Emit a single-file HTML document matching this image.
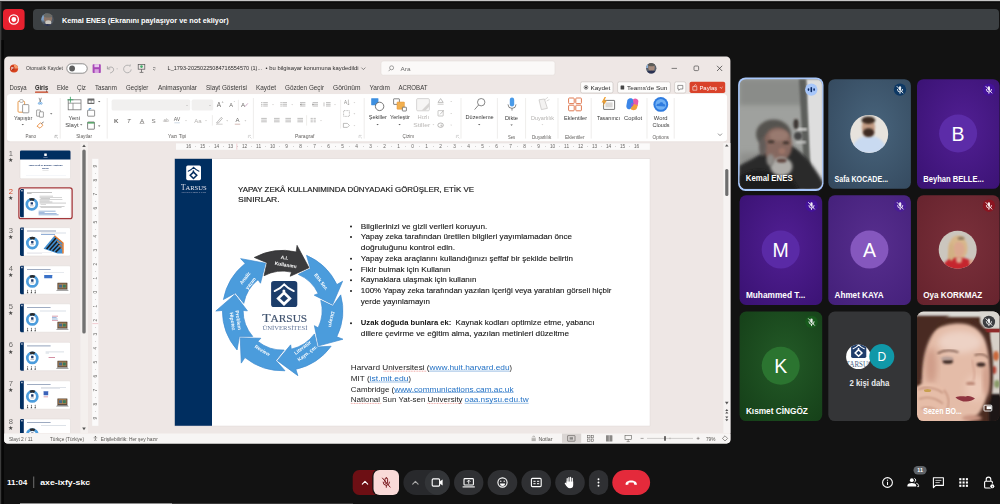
<!DOCTYPE html>
<html lang="tr">
<head>
<meta charset="utf-8">
<title>Meet - axe-ixfy-skc</title>
<style>
*{margin:0;padding:0}
html,body{width:1000px;height:504px;overflow:hidden;background:#121212}
svg{display:block;position:absolute;left:0;top:0}
text{font-family:"Liberation Sans",sans-serif;white-space:pre}
.sf{font-family:"Liberation Serif",serif}
.b{font-weight:bold}
</style>
</head>
<body>
<svg width="1000" height="504" viewBox="0 0 1000 504">
<!-- p_defs -->
<defs>
<filter id="b03" x="-30%" y="-30%" width="160%" height="160%"><feGaussianBlur stdDeviation="0.3"/></filter>
<filter id="b05" x="-30%" y="-30%" width="160%" height="160%"><feGaussianBlur stdDeviation="0.5"/></filter>
<filter id="b08" x="-30%" y="-30%" width="160%" height="160%"><feGaussianBlur stdDeviation="0.8"/></filter>
<filter id="b1" x="-30%" y="-30%" width="160%" height="160%"><feGaussianBlur stdDeviation="1"/></filter>
<filter id="b15" x="-30%" y="-30%" width="160%" height="160%"><feGaussianBlur stdDeviation="1.5"/></filter>
<filter id="b2" x="-30%" y="-30%" width="160%" height="160%"><feGaussianBlur stdDeviation="2"/></filter>
<filter id="b3" x="-30%" y="-30%" width="160%" height="160%"><feGaussianBlur stdDeviation="3"/></filter>
<filter id="b4" x="-30%" y="-30%" width="160%" height="160%"><feGaussianBlur stdDeviation="4"/></filter>
<filter id="b6" x="-30%" y="-30%" width="160%" height="160%"><feGaussianBlur stdDeviation="6"/></filter>
<radialGradient id="gPurple" cx="55%" cy="45%" r="75%"><stop offset="0" stop-color="#511f93"/><stop offset="1" stop-color="#3a1273"/></radialGradient>
<radialGradient id="gPurple2" cx="55%" cy="45%" r="75%"><stop offset="0" stop-color="#572e8e"/><stop offset="1" stop-color="#44207a"/></radialGradient>
<radialGradient id="gBlue" cx="55%" cy="45%" r="75%"><stop offset="0" stop-color="#48647c"/><stop offset="1" stop-color="#34495e"/></radialGradient>
<radialGradient id="gRed" cx="55%" cy="45%" r="75%"><stop offset="0" stop-color="#7a303b"/><stop offset="1" stop-color="#66232d"/></radialGradient>
<radialGradient id="gGreen" cx="55%" cy="45%" r="75%"><stop offset="0" stop-color="#235a27"/><stop offset="1" stop-color="#153f18"/></radialGradient>
</defs>
<!-- p_meet -->
<rect x="0" y="0" width="1000" height="504" fill="#121212"/>
<rect x="0" y="0" width="1000" height="1.4" fill="#c6c6c6"/>
<rect x="0" y="1.4" width="1000" height="1.6" fill="#0b0b0b"/>
<rect x="0" y="1.4" width="1.4" height="503" fill="#3c3c3c"/>
<rect x="1.4" y="40" width="2.6" height="464" fill="#070707"/>
<rect x="3" y="9" width="21.6" height="21" rx="4" fill="#e7212f"/>
<circle cx="13.8" cy="19.5" r="4.6" fill="none" stroke="#fff" stroke-width="1.3"/>
<circle cx="13.8" cy="19.5" r="2.4" fill="#fff"/>
<rect x="33" y="9" width="966" height="21" rx="4" fill="#3c4043"/>
<g>
<clipPath id="cpAv"><circle cx="47.5" cy="19.6" r="6.3"/></clipPath>
<g clip-path="url(#cpAv)">
<rect x="40" y="12" width="16" height="16" fill="#4d5560"/>
<rect x="40" y="12" width="6" height="9" fill="#7fa2c8" filter="url(#b08)"/>
<ellipse cx="48" cy="18.5" rx="4.2" ry="4.6" fill="#8b7468" filter="url(#b05)"/>
<ellipse cx="48" cy="15" rx="4.6" ry="2.6" fill="#6a6a66" filter="url(#b05)"/>
<ellipse cx="48.3" cy="22.5" rx="3" ry="2.2" fill="#c9c6c0" filter="url(#b05)"/>
<ellipse cx="47.5" cy="27" rx="7" ry="3" fill="#2b3350" filter="url(#b05)"/>
</g></g>
<text x="62" y="22.66" font-size="8" fill="#fff" class="b" textLength="166.6" lengthAdjust="spacingAndGlyphs">Kemal ENES (Ekranını paylaşıyor ve not ekliyor)</text>
<rect x="20" y="503" width="152" height="1" fill="#8c8c8c"/><rect x="172" y="503" width="181" height="1" fill="#3a3a3a"/>
<!-- p_tiles -->
<clipPath id="cpT00"><rect x="739.6" y="79.2" width="82.6" height="109.6" rx="6.5"/></clipPath>
<clipPath id="cpT01"><rect x="739.6" y="195.3" width="82.6" height="109.6" rx="6.5"/></clipPath>
<clipPath id="cpT02"><rect x="739.6" y="311.5" width="82.6" height="109.6" rx="6.5"/></clipPath>
<clipPath id="cpT10"><rect x="828.3" y="79.2" width="82.6" height="109.6" rx="6.5"/></clipPath>
<clipPath id="cpT11"><rect x="828.3" y="195.3" width="82.6" height="109.6" rx="6.5"/></clipPath>
<clipPath id="cpT12"><rect x="828.3" y="311.5" width="82.6" height="109.6" rx="6.5"/></clipPath>
<clipPath id="cpT20"><rect x="917" y="79.2" width="82.6" height="109.6" rx="6.5"/></clipPath>
<clipPath id="cpT21"><rect x="917" y="195.3" width="82.6" height="109.6" rx="6.5"/></clipPath>
<clipPath id="cpT22"><rect x="917" y="311.5" width="82.6" height="109.6" rx="6.5"/></clipPath>
<rect x="738.1" y="77.4" width="85.4" height="113.6" rx="7.5" fill="#a8c7fa"/>
<g clip-path="url(#cpT00)">
<rect x="739.6" y="79.2" width="82.6" height="109.6" fill="#9fa19e"/>
<rect x="739.6" y="79.2" width="82.6" height="26" fill="#8a8c89" filter="url(#b2)"/>
<rect x="739.6" y="153.2" width="40" height="40" fill="#8c8d8a" filter="url(#b3)"/>
<path d="M806 79.2 L823 79.2 L823 188.8 L811 188.8 Z" fill="#dedede" filter="url(#b1)"/>
<path d="M799 79.2 L806 79.2 L811 188.8 L805 188.8 Z" fill="#5d5e5c" filter="url(#b1)"/>
<rect x="797" y="128" width="10" height="2.6" fill="#d4d4d2" filter="url(#b08)"/>
<rect x="796" y="141" width="10" height="2.4" fill="#c4c4c2" filter="url(#b08)"/>
<ellipse cx="796" cy="124" rx="2.6" ry="5" fill="#3a3633" filter="url(#b08)"/>
<ellipse cx="798" cy="136" rx="4" ry="4" fill="#444" filter="url(#b08)"/>
<path d="M739 166 C750 160 758 156 764 152 L792 146 C803 152 814 166 823 182 L823 192 L739 192 Z" fill="#2a2a2b" filter="url(#b15)"/>
<path d="M739 176 C752 170 760 168 768 172 L790 176 L800 192 L739 192 Z" fill="#1b1b1c" filter="url(#b15)"/>
<ellipse cx="773.5" cy="134" rx="17.5" ry="14.5" fill="#55534f" filter="url(#b15)"/>
<ellipse cx="777.5" cy="145" rx="14.6" ry="17.4" fill="#86685e" filter="url(#b15)"/>
<ellipse cx="779" cy="135.5" rx="9.5" ry="5.5" fill="#997a6f" filter="url(#b15)"/>
<ellipse cx="762.6" cy="147" rx="3.6" ry="9" fill="#625c58" filter="url(#b15)"/>
<ellipse cx="781.4" cy="166.6" rx="11" ry="9.4" fill="#afada9" filter="url(#b15)"/>
<ellipse cx="770.5" cy="160" rx="4" ry="6" fill="#8f8c88" filter="url(#b15)"/>
<ellipse cx="782" cy="151" rx="3.4" ry="3" fill="#9c7468" filter="url(#b1)"/>
<ellipse cx="781.6" cy="160.6" rx="5" ry="2.2" fill="#5e453e" filter="url(#b08)"/>
<ellipse cx="771" cy="141.8" rx="3.4" ry="1.5" fill="#42342f" filter="url(#b08)"/>
<ellipse cx="786" cy="142.8" rx="3.2" ry="1.5" fill="#42342f" filter="url(#b08)"/>
</g>
<text x="745.8" y="181.24" font-size="8.5" fill="#fff" class="b" textLength="46.8" lengthAdjust="spacingAndGlyphs">Kemal ENES</text>
<circle cx="811.3" cy="89.6" r="6.2" fill="#a8c7fa"/>
<rect x="807.7" y="88.3" width="1.6" height="2.6" rx="0.8" fill="#0b2a66"/>
<rect x="810.5" y="87" width="1.6" height="5.2" rx="0.8" fill="#0b2a66"/>
<rect x="813.3" y="88.3" width="1.6" height="2.6" rx="0.8" fill="#0b2a66"/>
<rect x="828.3" y="79.2" width="82.6" height="109.6" rx="6.5" fill="url(#gBlue)"/>
<clipPath id="cpSafa"><circle cx="869.2" cy="133.9" r="19"/></clipPath>
<g clip-path="url(#cpSafa)">
<rect x="850" y="114" width="40" height="40" fill="#e7e3dd"/>
<path d="M851 153 C853 140 860 136 869 136 C879 136 885 140 887 153 Z" fill="#c9daf1" filter="url(#b08)"/>
<ellipse cx="868.4" cy="127.2" rx="6.6" ry="8.4" fill="#c39c84" filter="url(#b08)"/>
<ellipse cx="868.4" cy="120.2" rx="6.8" ry="3.7" fill="#3b2c23" filter="url(#b08)"/>
<ellipse cx="868.6" cy="132.6" rx="5.7" ry="4.4" fill="#3c2b23" filter="url(#b08)"/>
</g>
<circle cx="900" cy="89.6" r="6.2" fill="#0d3864"/>
<g stroke="#fff" stroke-width="0.9" fill="none" stroke-linecap="round" opacity="0.92">
<rect x="898.9" y="86.2" width="2.2" height="4.4" rx="1.1" fill="#fff" stroke="none"/>
<path d="M897.4 89.4 a2.6 2.6 0 0 0 5.2 0"/>
<path d="M900 92 v1.4"/>
<path d="M897 86.4 L903 93"/>
</g>
<text x="834.6" y="181.64" font-size="8.5" fill="#fff" class="b" textLength="53.5" lengthAdjust="spacingAndGlyphs">Safa KOCADE...</text>
<rect x="917" y="79.2" width="82.6" height="109.6" rx="6.5" fill="url(#gPurple)"/>
<circle cx="958.1" cy="133.5" r="19" fill="#5c2ca8"/><text x="958.1" y="140.68" font-size="19.5" fill="#fff" text-anchor="middle">B</text>
<circle cx="988.9" cy="89.6" r="6.2" fill="#44129a"/>
<g stroke="#fff" stroke-width="0.9" fill="none" stroke-linecap="round" opacity="0.92">
<rect x="987.8" y="86.2" width="2.2" height="4.4" rx="1.1" fill="#fff" stroke="none"/>
<path d="M986.3 89.4 a2.6 2.6 0 0 0 5.2 0"/>
<path d="M988.9 92 v1.4"/>
<path d="M985.9 86.4 L991.9 93"/>
</g>
<text x="923.3" y="181.64" font-size="8.5" fill="#fff" class="b" textLength="60.5" lengthAdjust="spacingAndGlyphs">Beyhan BELLE...</text>
<rect x="739.6" y="195.3" width="82.6" height="109.6" rx="6.5" fill="url(#gPurple)"/>
<circle cx="780.7" cy="249.6" r="19" fill="#5a2aa6"/><text x="780.7" y="256.78" font-size="19.5" fill="#fff" text-anchor="middle">M</text>
<circle cx="811.5" cy="205.7" r="6.2" fill="#44129a"/>
<g stroke="#fff" stroke-width="0.9" fill="none" stroke-linecap="round" opacity="0.92">
<rect x="810.4" y="202.3" width="2.2" height="4.4" rx="1.1" fill="#fff" stroke="none"/>
<path d="M808.9 205.5 a2.6 2.6 0 0 0 5.2 0"/>
<path d="M811.5 208.1 v1.4"/>
<path d="M808.5 202.5 L814.5 209.1"/>
</g>
<text x="745.9" y="297.74" font-size="8.5" fill="#fff" class="b" textLength="59.5" lengthAdjust="spacingAndGlyphs">Muhammed T...</text>
<rect x="828.3" y="195.3" width="82.6" height="109.6" rx="6.5" fill="url(#gPurple2)"/>
<circle cx="869.4" cy="249.6" r="19" fill="#8557be"/><text x="869.4" y="256.78" font-size="19.5" fill="#fff" text-anchor="middle">A</text>
<circle cx="900.2" cy="205.7" r="6.2" fill="#4a1d96"/>
<g stroke="#fff" stroke-width="0.9" fill="none" stroke-linecap="round" opacity="0.92">
<rect x="899.1" y="202.3" width="2.2" height="4.4" rx="1.1" fill="#fff" stroke="none"/>
<path d="M897.6 205.5 a2.6 2.6 0 0 0 5.2 0"/>
<path d="M900.2 208.1 v1.4"/>
<path d="M897.2 202.5 L903.2 209.1"/>
</g>
<text x="834.6" y="297.74" font-size="8.5" fill="#fff" class="b" textLength="49" lengthAdjust="spacingAndGlyphs">Ahmet KAYA</text>
<rect x="917" y="195.3" width="82.6" height="109.6" rx="6.5" fill="url(#gRed)"/>
<clipPath id="cpOya"><circle cx="957.7" cy="249.8" r="19"/></clipPath>
<g clip-path="url(#cpOya)">
<rect x="938" y="230" width="40" height="40" fill="#cbc6be"/>
<ellipse cx="958" cy="248" rx="9.6" ry="12.4" fill="#d8b78b" filter="url(#b08)"/>
<ellipse cx="951.6" cy="258" rx="3.6" ry="8.5" fill="#d2b084" filter="url(#b08)"/>
<path d="M941 272 C943 261 949 257.4 958 257.6 C967 257.2 973.4 260 975 272 Z" fill="#c6262d" filter="url(#b08)"/>
<ellipse cx="971.6" cy="262.6" rx="2.4" ry="3.4" fill="#d9a58c" filter="url(#b08)"/>
<ellipse cx="958.8" cy="249.4" rx="5.8" ry="7.6" fill="#dba88f" filter="url(#b08)"/>
<ellipse cx="959" cy="259.4" rx="3" ry="3.6" fill="#dba88f" filter="url(#b08)"/>
<ellipse cx="961" cy="238.2" rx="3.4" ry="1.5" fill="#8a765e" filter="url(#b08)"/>
<ellipse cx="951.4" cy="252" rx="2.6" ry="9" fill="#d2b084" filter="url(#b08)"/>
</g>
<circle cx="988.9" cy="205.7" r="6.2" fill="#8c1420"/>
<g stroke="#fff" stroke-width="0.9" fill="none" stroke-linecap="round" opacity="0.92">
<rect x="987.8" y="202.3" width="2.2" height="4.4" rx="1.1" fill="#fff" stroke="none"/>
<path d="M986.3 205.5 a2.6 2.6 0 0 0 5.2 0"/>
<path d="M988.9 208.1 v1.4"/>
<path d="M985.9 202.5 L991.9 209.1"/>
</g>
<text x="923.3" y="297.74" font-size="8.5" fill="#fff" class="b" textLength="59" lengthAdjust="spacingAndGlyphs">Oya KORKMAZ</text>
<rect x="739.6" y="311.5" width="82.6" height="109.6" rx="6.5" fill="url(#gGreen)"/>
<circle cx="780.7" cy="365.8" r="19" fill="#2b7430"/><text x="780.7" y="372.98" font-size="19.5" fill="#fff" text-anchor="middle">K</text>
<circle cx="811.5" cy="321.9" r="6.2" fill="#175a1c"/>
<g stroke="#fff" stroke-width="0.9" fill="none" stroke-linecap="round" opacity="0.92">
<rect x="810.4" y="318.5" width="2.2" height="4.4" rx="1.1" fill="#fff" stroke="none"/>
<path d="M808.9 321.7 a2.6 2.6 0 0 0 5.2 0"/>
<path d="M811.5 324.3 v1.4"/>
<path d="M808.5 318.7 L814.5 325.3"/>
</g>
<text x="745.9" y="413.94" font-size="8.5" fill="#fff" class="b" textLength="62" lengthAdjust="spacingAndGlyphs">Kısmet CİNGÖZ</text>
<rect x="828.3" y="311.5" width="82.6" height="109.6" rx="6.5" fill="#343537"/>
<clipPath id="cpTL"><circle cx="858.4" cy="356.8" r="12.3"/></clipPath>
<g clip-path="url(#cpTL)">
<rect x="846" y="344" width="25" height="25" fill="#fff"/>
<rect x="851.1" y="342.8" width="15.2" height="15.2" rx="1.67" fill="#1f3d6b"/><path d="M853.13 348.72 Q856.73 347.15 858.7 344.83 Q860.67 347.15 864.27 348.72" fill="none" stroke="#fff" stroke-width="1.04" stroke-linecap="round"/><path d="M858.58 349.7 L861.95 352.95 L858.58 356.2 L855.22 352.95 Z" fill="none" stroke="#fff" stroke-width="1.57" stroke-linejoin="miter"/><circle cx="858.53" cy="348.72" r="0.87" fill="#fff"/>
<text x="858.8" y="366.98" font-size="7.2" fill="#4a5f85" text-anchor="middle" class="sf" textLength="26" lengthAdjust="spacingAndGlyphs">TARSUS</text>
</g>
<circle cx="881.8" cy="356.5" r="12.5" fill="#1098a8"/>
<text x="881.8" y="361.1" font-size="12" fill="#fff" text-anchor="middle">D</text>
<text x="869.4" y="386.31" font-size="8.4" fill="#e8eaed" text-anchor="middle" class="b" textLength="40" lengthAdjust="spacingAndGlyphs">2 kişi daha</text>
<g clip-path="url(#cpT22)">
<rect x="917" y="311.5" width="82.6" height="109.6" fill="#4a2b20"/>
<rect x="915" y="309.5" width="86.6" height="7.6" fill="#dcdbd6" filter="url(#b08)"/>
<rect x="980" y="309.5" width="22" height="20" fill="#d9d6d0" filter="url(#b08)"/>
<rect x="990" y="330" width="12" height="66" fill="#d6cfc7" filter="url(#b1)"/>
<rect x="978" y="328.8" width="24" height="3.6" fill="#8e2c2a" filter="url(#b05)"/>
<ellipse cx="996" cy="356" rx="3" ry="5" fill="#c9683a" filter="url(#b1)"/>
<ellipse cx="994" cy="370" rx="2.4" ry="4" fill="#b84a3a" filter="url(#b1)"/>
<ellipse cx="997" cy="384" rx="3" ry="4" fill="#8a9a6a" filter="url(#b1)"/>
<rect x="989" y="394" width="14" height="30" fill="#1c1718" filter="url(#b1)"/>
<path d="M972 320 C986 322 994 340 993 372 C993 386 992 396 990 402 L984 400 C987 380 986 350 978 336 Z" fill="#4a2b20" filter="url(#b1)"/>
<path d="M921.5 352 C922 334 938 323.4 960 323.4 C978 323.4 988 338 989 360 C990 382 988 400 980 412 C974 420 966 424 956 424 L930 424 C923 410 920 380 921.5 352 Z" fill="#e4bca8" filter="url(#b15)"/>
<ellipse cx="960" cy="342" rx="22" ry="11" fill="#edd2c5" filter="url(#b3)"/>
<ellipse cx="975" cy="388" rx="10" ry="13" fill="#ecc9b8" filter="url(#b3)"/>
<ellipse cx="931" cy="366" rx="6" ry="18" fill="#cf9c88" filter="url(#b3)"/>
<ellipse cx="986" cy="380" rx="3" ry="16" fill="#cf9c88" filter="url(#b2)"/>
<path d="M915 316 L950 316 C940 322 932 332 927 346 C924 354 922 366 921 380 L915 380 Z" fill="#4a2b20" filter="url(#b15)"/>
<ellipse cx="947.8" cy="361.4" rx="5.2" ry="2.4" fill="#3a2620" filter="url(#b08)"/>
<ellipse cx="981" cy="364.6" rx="4.4" ry="2.2" fill="#3a2620" filter="url(#b08)"/>
<ellipse cx="947" cy="358.4" rx="6.5" ry="1.8" fill="#b7a09a" filter="url(#b08)"/>
<path d="M937.6 353.4 C944 349.6 952 349.8 958.4 352.2" fill="none" stroke="#7a5648" stroke-width="1.7" filter="url(#b08)"/>
<path d="M974.6 355.2 C980 353.4 985.4 354.8 988.6 358" fill="none" stroke="#7a5648" stroke-width="1.6" filter="url(#b08)"/>
<path d="M972 360 C974 370 976 376 973 381" fill="none" stroke="#d2a08e" stroke-width="1.4" filter="url(#b1)"/>
<ellipse cx="970.6" cy="383.4" rx="4.6" ry="1.6" fill="#b98472" filter="url(#b08)"/>
<path d="M955.4 397.4 C960 395.4 964 396.6 966 396.4 C969 395.6 972 396.6 975 398.6 C970 402.8 961 402.6 955.4 397.4 Z" fill="#8f3640" filter="url(#b05)"/>
<ellipse cx="972" cy="418" rx="10" ry="3" fill="#c99482" filter="url(#b15)"/>
<path d="M915 388 C922 381 936 382 944 388 C950 394 950 404 946 412 C943 418 940 422 938 426 L915 426 Z" fill="#e6bda8" filter="url(#b1)"/>
<path d="M918 389.6 C926 386 936 387.6 943 393" fill="none" stroke="#b5806c" stroke-width="1.1" filter="url(#b08)"/>
<path d="M919 399 C927 396 936 398 943 403.6" fill="none" stroke="#b5806c" stroke-width="1.1" filter="url(#b08)"/>
<path d="M921 408.6 C928 406 935 408 940 412.6" fill="none" stroke="#b5806c" stroke-width="1" filter="url(#b08)"/>
<path d="M944 390 C949 396 950 404 946 412" fill="none" stroke="#c08a76" stroke-width="1.2" filter="url(#b1)"/>
<ellipse cx="927.6" cy="390.6" rx="3.6" ry="1.5" fill="#c8a050" filter="url(#b05)"/>
</g>
<circle cx="988.9" cy="321.9" r="6.2" fill="#3c3d40"/>
<g stroke="#fff" stroke-width="0.9" fill="none" stroke-linecap="round" opacity="0.92">
<rect x="987.8" y="318.5" width="2.2" height="4.4" rx="1.1" fill="#fff" stroke="none"/>
<path d="M986.3 321.7 a2.6 2.6 0 0 0 5.2 0"/>
<path d="M988.9 324.3 v1.4"/>
<path d="M985.9 318.7 L991.9 325.3"/>
</g>
<text x="923.3" y="413.54" font-size="8.5" fill="#fff" class="b" textLength="38.5" lengthAdjust="spacingAndGlyphs">Sezen BO...</text>
<rect x="984" y="405.2" width="7.8" height="5.8" rx="0.8" fill="none" stroke="#fff" stroke-width="0.9"/>
<rect x="986.6" y="406.2" width="4.8" height="3" fill="#fff"/>
<!-- p_ppt -->
<g id="ppt" filter="url(#b03)">
<path d="M4.2 440 V60.8 a4.2 4.2 0 0 1 4.2 -4.2 H726.2 a4.2 4.2 0 0 1 4.2 4.2 V439.6 a3.8 3.8 0 0 1 -3.8 3.8 H7.6 a3.4 3.4 0 0 1 -3.4 -3.4 Z" fill="#eee7e5"/>
<circle cx="14" cy="68.5" r="4.1" fill="#d8431f"/>
<path d="M14 64.4 a4.1 4.1 0 0 1 4.1 4.1 H14 Z" fill="#f59a6a"/>
<rect x="10.6" y="66.6" width="3.8" height="4" rx="0.6" fill="#b7321a"/>
<text x="12.5" y="69.82" font-size="3.4" fill="#fff" text-anchor="middle" class="b">P</text>
<text x="26" y="70.4" font-size="5.3" fill="#3a3a3a" textLength="37" lengthAdjust="spacingAndGlyphs">Otomatik Kaydet</text>
<rect x="66.8" y="63.8" width="20.4" height="9.4" rx="4.7" fill="#fff" stroke="#616161" stroke-width="0.7"/>
<circle cx="72.1" cy="68.5" r="2.9" fill="#5f5f5f"/>
<rect x="92.6" y="64.2" width="8.2" height="8.8" rx="0.8" fill="#a848b8"/>
<rect x="94.4" y="64.2" width="4.6" height="3" fill="#e9c8ee"/>
<rect x="94.6" y="69.2" width="4.2" height="3.8" fill="#d9a6e0"/>
<path d="M107.4 66.2 L107.4 69 L110.2 69 M107.6 68.8 C109.4 66.2 113.6 66.6 113.6 69.6 C113.6 71.2 112.4 72.2 110.2 73" fill="none" stroke="#9a9a9a" stroke-width="0.8"/>
<line x1="116.4" y1="68.8" x2="118" y2="68.8" stroke="#aaa" stroke-width="0.5"/>
<path d="M130.2 66.4 L130.2 64.4 M130 66.2 A3.8 3.8 0 1 0 131.2 69.4" fill="none" stroke="#a6a6a6" stroke-width="0.8"/>
<rect x="138.2" y="64.4" width="6.6" height="4.8" fill="none" stroke="#555" stroke-width="0.7"/>
<path d="M141.5 69.2 V72.2 M139.6 72.4 H143.4" fill="none" stroke="#555" stroke-width="0.7"/>
<circle cx="141.5" cy="66.6" r="1.3" fill="#3fae6a"/>
<path d="M153 67.6 H155.4 M153 69 L154.2 70.2 L155.4 69" fill="none" stroke="#555" stroke-width="0.6"/>
<text x="167.6" y="70.47" font-size="5.5" fill="#2b2b2b" textLength="94.4" lengthAdjust="spacingAndGlyphs">L_1793-20250225084716554570 (1)...</text>
<text x="265.6" y="70.47" font-size="5.5" fill="#2b2b2b" textLength="93" lengthAdjust="spacingAndGlyphs">• bu bilgisayar konumuna kaydedildi</text>
<path d="M361.4 67.6 L363.4 69.6 L365.4 67.6" fill="none" stroke="#444" stroke-width="0.6"/>
<rect x="381" y="61" width="174" height="14.2" rx="2.2" fill="#fbf9f8" stroke="#e2dbd8" stroke-width="0.6"/>
<circle cx="391.6" cy="67.8" r="2" fill="none" stroke="#666" stroke-width="0.6"/>
<line x1="390.2" y1="69.4" x2="388.6" y2="71.2" stroke="#666" stroke-width="0.6"/>
<text x="400.5" y="70.5" font-size="5.6" fill="#6a6a6a" textLength="10" lengthAdjust="spacingAndGlyphs">Ara</text>
<clipPath id="cpAcc"><circle cx="651.2" cy="68.2" r="5.2"/></clipPath><g clip-path="url(#cpAcc)">
<rect x="645" y="62" width="13" height="13" fill="#59616d"/>
<ellipse cx="651.5" cy="67.5" rx="3.2" ry="3.8" fill="#a58a7c" filter="url(#b05)"/>
<ellipse cx="651.5" cy="64.2" rx="3.6" ry="2" fill="#5c5b58" filter="url(#b05)"/>
<ellipse cx="651.5" cy="73.5" rx="6" ry="3" fill="#2a3352" filter="url(#b05)"/>
<rect x="645" y="62" width="3" height="6" fill="#8cb0d8" filter="url(#b05)"/>
</g>
<line x1="671.6" y1="68.4" x2="677" y2="68.4" stroke="#333" stroke-width="0.6"/>
<rect x="694" y="66" width="4.6" height="4.6" rx="1" fill="none" stroke="#333" stroke-width="0.6"/>
<path d="M717 65.8 L722.2 71 M722.2 65.8 L717 71" fill="none" stroke="#333" stroke-width="0.7"/>
<text x="9.5" y="90.06" font-size="6.3" fill="#3b3a39" textLength="17" lengthAdjust="spacingAndGlyphs">Dosya</text>
<text x="57" y="90.06" font-size="6.3" fill="#3b3a39" textLength="11.6" lengthAdjust="spacingAndGlyphs">Ekle</text>
<text x="77" y="90.06" font-size="6.3" fill="#3b3a39" textLength="9" lengthAdjust="spacingAndGlyphs">Çiz</text>
<text x="95" y="90.06" font-size="6.3" fill="#3b3a39" textLength="22" lengthAdjust="spacingAndGlyphs">Tasarım</text>
<text x="126" y="90.06" font-size="6.3" fill="#3b3a39" textLength="22.4" lengthAdjust="spacingAndGlyphs">Geçişler</text>
<text x="158" y="90.06" font-size="6.3" fill="#3b3a39" textLength="39" lengthAdjust="spacingAndGlyphs">Animasyonlar</text>
<text x="206" y="90.06" font-size="6.3" fill="#3b3a39" textLength="41" lengthAdjust="spacingAndGlyphs">Slayt Gösterisi</text>
<text x="256" y="90.06" font-size="6.3" fill="#3b3a39" textLength="20" lengthAdjust="spacingAndGlyphs">Kaydet</text>
<text x="285" y="90.06" font-size="6.3" fill="#3b3a39" textLength="39" lengthAdjust="spacingAndGlyphs">Gözden Geçir</text>
<text x="333" y="90.06" font-size="6.3" fill="#3b3a39" textLength="27.5" lengthAdjust="spacingAndGlyphs">Görünüm</text>
<text x="369.5" y="90.06" font-size="6.3" fill="#3b3a39" textLength="20.5" lengthAdjust="spacingAndGlyphs">Yardım</text>
<text x="398.5" y="90.06" font-size="6.3" fill="#3b3a39" textLength="29" lengthAdjust="spacingAndGlyphs">ACROBAT</text>
<text x="35" y="90.06" font-size="6.3" fill="#252423" class="b" textLength="13.2" lengthAdjust="spacingAndGlyphs">Giriş</text>
<rect x="35" y="91.6" width="13.2" height="1.2" rx="0.5" fill="#c43e1c"/>
<rect x="580.6" y="81.8" width="32.4" height="11.2" rx="1.8" fill="#fdfcfb" stroke="#c4bdba" stroke-width="0.6"/>
<circle cx="586" cy="87.4" r="1.9" fill="none" stroke="#333" stroke-width="0.5"/><circle cx="586" cy="87.4" r="1" fill="#333"/>
<text x="590.4" y="89.82" font-size="6.2" fill="#2b2b2b" textLength="20" lengthAdjust="spacingAndGlyphs">Kaydet</text>
<rect x="617.6" y="81.8" width="52.8" height="11.2" rx="1.8" fill="#fdfcfb" stroke="#c4bdba" stroke-width="0.6"/>
<rect x="620.6" y="85.4" width="3.6" height="4.2" rx="0.6" fill="#444"/>
<text x="627" y="89.82" font-size="6.2" fill="#2b2b2b" textLength="40.4" lengthAdjust="spacingAndGlyphs">Teams'de Sun</text>
<rect x="674.6" y="81.8" width="11.2" height="11.2" rx="1.8" fill="#fdfcfb" stroke="#c4bdba" stroke-width="0.6"/>
<path d="M677.8 85.4 H682.8 V89 H680 L678.8 90.4 V89 H677.8 Z" fill="none" stroke="#444" stroke-width="0.55"/>
<rect x="689.6" y="81.8" width="35.6" height="11.2" rx="1.8" fill="#d9432a"/>
<path d="M692.8 86.6 H696.8 V90.2 H692.8 Z M694 86.4 L695.4 84.6 L696.6 85.6" fill="none" stroke="#fff" stroke-width="0.55"/>
<text x="699.4" y="89.82" font-size="6.2" fill="#fff" textLength="17.8" lengthAdjust="spacingAndGlyphs">Paylaş</text>
<path d="M719.8 87 L721.2 88.4 L722.6 87" fill="none" stroke="#fff" stroke-width="0.6"/>
<rect x="7.2" y="94.3" width="719.6" height="47.1" rx="3.2" fill="#ffffff"/>
<rect x="7.2" y="140.6" width="719.6" height="1.6" rx="0.8" fill="#e4dcd9" opacity="0.6" filter="url(#b05)"/>
<rect x="7.2" y="94.3" width="719.6" height="46.9" rx="3.2" fill="#ffffff"/>
<line x1="60.2" y1="98" x2="60.2" y2="138.6" stroke="#e3e0de" stroke-width="0.6"/>
<line x1="107.2" y1="98" x2="107.2" y2="138.6" stroke="#e3e0de" stroke-width="0.6"/>
<line x1="253.4" y1="98" x2="253.4" y2="138.6" stroke="#e3e0de" stroke-width="0.6"/>
<line x1="364.2" y1="98" x2="364.2" y2="138.6" stroke="#e3e0de" stroke-width="0.6"/>
<line x1="461" y1="98" x2="461" y2="138.6" stroke="#e3e0de" stroke-width="0.6"/>
<line x1="497.4" y1="98" x2="497.4" y2="138.6" stroke="#e3e0de" stroke-width="0.6"/>
<line x1="525.6" y1="98" x2="525.6" y2="138.6" stroke="#e3e0de" stroke-width="0.6"/>
<line x1="558" y1="98" x2="558" y2="138.6" stroke="#e3e0de" stroke-width="0.6"/>
<line x1="591.2" y1="98" x2="591.2" y2="138.6" stroke="#e3e0de" stroke-width="0.6"/>
<line x1="647" y1="98" x2="647" y2="138.6" stroke="#e3e0de" stroke-width="0.6"/>
<line x1="674.2" y1="98" x2="674.2" y2="138.6" stroke="#e3e0de" stroke-width="0.6"/>
<rect x="18" y="101.2" width="6.6" height="11" rx="1" fill="none" stroke="#e8923c" stroke-width="0.9"/>
<rect x="19.8" y="99.6" width="3.2" height="2.8" rx="0.8" fill="#fff" stroke="#8a8a8a" stroke-width="0.6"/>
<rect x="22.6" y="104.6" width="6.2" height="8.2" rx="0.6" fill="#fff" stroke="#777" stroke-width="0.7"/>
<text x="14" y="119.8" font-size="5.6" fill="#444" textLength="18.2" lengthAdjust="spacingAndGlyphs">Yapıştır</text>
<path d="M21.65 124.05 L23.95 124.05 L22.8 125.35 Z" fill="#555"/>
<path d="M39 97.8 L40.6 102 M41.4 97.8 L39.8 102" fill="none" stroke="#555" stroke-width="0.6"/>
<circle cx="39.2" cy="103.4" r="0.9" fill="none" stroke="#2f86d6" stroke-width="0.6"/><circle cx="41.2" cy="103.4" r="0.9" fill="none" stroke="#2f86d6" stroke-width="0.6"/>
<rect x="36.6" y="110" width="3.8" height="6.2" rx="0.4" fill="#fff" stroke="#666" stroke-width="0.6"/>
<rect x="39.4" y="111.8" width="4" height="5.4" rx="0.4" fill="#fff" stroke="#666" stroke-width="0.6"/>
<path d="M50.05 113.25 L52.35 113.25 L51.2 114.55 Z" fill="#555"/>
<path d="M37 126.2 L40.4 122.8 L43 125.2 L40 128.2 Z" fill="#fff" stroke="#e8822c" stroke-width="0.8"/>
<path d="M41.4 123.6 L43.6 122" fill="none" stroke="#555" stroke-width="0.8"/>
<text x="25.4" y="138.35" font-size="4.9" fill="#605e5c" textLength="10.6" lengthAdjust="spacingAndGlyphs">Pano</text>
<path d="M55 135.4 H57.6 M55 135.4 V138 M56.2 136.6 L58 138.4" fill="none" stroke="#777" stroke-width="0.45"/>
<rect x="68.2" y="99.8" width="12.8" height="10" fill="#fff" stroke="#767676" stroke-width="0.8"/>
<path d="M68.2 103.2 H81 M73 103.2 V109.8" fill="none" stroke="#767676" stroke-width="0.7"/>
<path d="M70.4 96.8 V102.6 M67.4 99.8 H73.4" fill="none" stroke="#2f9e5b" stroke-width="0.8"/>
<text x="68.6" y="119.8" font-size="5.6" fill="#444" textLength="11.4" lengthAdjust="spacingAndGlyphs">Yeni</text>
<text x="65.2" y="126.8" font-size="5.6" fill="#444" textLength="13.4" lengthAdjust="spacingAndGlyphs">Slayt</text>
<path d="M80.05 124.25 L82.35 124.25 L81.2 125.55 Z" fill="#555"/>
<rect x="87.4" y="98.4" width="7" height="5.6" rx="0.4" fill="#6b6b6b"/>
<rect x="88.6" y="100.6" width="2.2" height="2.2" fill="#fff"/><rect x="91.4" y="100.6" width="2.2" height="2.2" fill="#fff"/>
<path d="M98.05 101.05 L100.35 101.05 L99.2 102.35 Z" fill="#555"/>
<rect x="87.6" y="110.2" width="7" height="6" rx="0.4" fill="#fff" stroke="#666" stroke-width="0.7"/>
<path d="M89.2 110.2 L89.2 108.6 L91.2 108.6" fill="none" stroke="#2f86d6" stroke-width="0.8"/>
<rect x="87.6" y="122" width="6.8" height="7.2" rx="0.4" fill="#fff" stroke="#666" stroke-width="0.8"/>
<rect x="87.6" y="122" width="6.8" height="1.6" fill="#5aa56b"/>
<path d="M98.05 125.45 L100.35 125.45 L99.2 126.75 Z" fill="#555"/>
<text x="76.2" y="138.35" font-size="4.9" fill="#605e5c" textLength="15.8" lengthAdjust="spacingAndGlyphs">Slaytlar</text>
<rect x="111.6" y="99.6" width="78.6" height="11" rx="1.6" fill="#f1f0ef"/>
<rect x="191.6" y="99.6" width="21.6" height="11" rx="1.6" fill="#f1f0ef"/>
<path d="M186.08 104.96 L187.92 104.96 L187 106 Z" fill="#b5b5b5"/><path d="M209.08 104.96 L210.92 104.96 L210 106 Z" fill="#b5b5b5"/>
<text x="116.2" y="122.82" font-size="6.2" fill="#6e6c6a" text-anchor="middle" class="b">K</text>
<text x="129" y="122.82" font-size="6.2" fill="#6e6c6a" text-anchor="middle" font-style="italic">T</text>
<text x="142" y="122.62" font-size="6.2" fill="#6e6c6a" text-anchor="middle">A</text><line x1="139.6" y1="123.4" x2="144.4" y2="123.4" stroke="#6e6c6a" stroke-width="0.5"/>
<text x="153.6" y="122.82" font-size="6.2" fill="#7a7876" text-anchor="middle">S</text>
<text x="166" y="122.45" font-size="4.6" fill="#b0aeac" text-anchor="middle">ab</text><line x1="162.8" y1="121" x2="169.2" y2="121" stroke="#b0aeac" stroke-width="0.4"/>
<text x="177" y="121.46" font-size="5.2" fill="#6e6c6a" text-anchor="middle">AV</text><line x1="174.4" y1="122.8" x2="179.8" y2="122.8" stroke="#9fb4cc" stroke-width="0.5"/>
<path d="M185.08 120.16 L186.92 120.16 L186 121.2 Z" fill="#c2c0be"/>
<text x="198" y="122.75" font-size="6" fill="#b5b3b1" text-anchor="middle">Aa</text><path d="M205.08 120.16 L206.92 120.16 L206 121.2 Z" fill="#c2c0be"/>
<line x1="212.4" y1="115.2" x2="212.4" y2="125.6" stroke="#e3e0de" stroke-width="0.6"/>
<text x="219" y="107.29" font-size="6.4" fill="#6e6c6a" text-anchor="middle">A</text><text x="222.6" y="104.02" font-size="3.4" fill="#6e6c6a" text-anchor="middle">^</text>
<text x="231" y="107.2" font-size="5.6" fill="#6e6c6a" text-anchor="middle">A</text><text x="234.4" y="104.49" font-size="3.6" fill="#6e6c6a" text-anchor="middle">ˇ</text>
<line x1="238.4" y1="99.8" x2="238.4" y2="110.4" stroke="#e3e0de" stroke-width="0.6"/>
<text x="243" y="107.22" font-size="6.2" fill="#6e6c6a" text-anchor="middle">A</text><path d="M245 106.6 L247.8 103.4" fill="none" stroke="#c9a0c0" stroke-width="0.9"/>
<path d="M216.6 122.8 L221.2 117.4 L222.4 118.4 L218.2 123.2 Z" fill="none" stroke="#8a8886" stroke-width="0.55"/><line x1="216" y1="124.2" x2="222.6" y2="124.2" stroke="#bdbbb9" stroke-width="0.7"/>
<path d="M226.28 120.36 L228.12 120.36 L227.2 121.4 Z" fill="#c2c0be"/>
<text x="237.4" y="122.35" font-size="6" fill="#6e6c6a" text-anchor="middle">A</text><line x1="234.8" y1="124.2" x2="240.2" y2="124.2" stroke="#c9a9a4" stroke-width="0.8"/>
<path d="M244.48 120.36 L246.32 120.36 L245.4 121.4 Z" fill="#c2c0be"/>
<text x="168" y="138.35" font-size="4.9" fill="#605e5c" textLength="18.4" lengthAdjust="spacingAndGlyphs">Yazı Tipi</text>
<path d="M248.4 135.4 H251 M248.4 135.4 V138 M249.6 136.6 L251.4 138.4" fill="none" stroke="#aaa" stroke-width="0.45"/>
<line x1="263.2" y1="102.6" x2="267.8" y2="102.6" stroke="#8c8a88" stroke-width="0.55"/><line x1="263.2" y1="104.3" x2="267.8" y2="104.3" stroke="#8c8a88" stroke-width="0.55"/><line x1="263.2" y1="106" x2="267.8" y2="106" stroke="#8c8a88" stroke-width="0.55"/>
<rect x="261.4" y="102.2" width="0.9" height="0.9" fill="#8c8a88"/>
<rect x="261.4" y="103.9" width="0.9" height="0.9" fill="#8c8a88"/>
<rect x="261.4" y="105.6" width="0.9" height="0.9" fill="#8c8a88"/>
<line x1="282.4" y1="102.6" x2="287" y2="102.6" stroke="#8c8a88" stroke-width="0.55"/><line x1="282.4" y1="104.3" x2="287" y2="104.3" stroke="#8c8a88" stroke-width="0.55"/><line x1="282.4" y1="106" x2="287" y2="106" stroke="#8c8a88" stroke-width="0.55"/>
<rect x="280.6" y="102.2" width="0.9" height="0.9" fill="#8c8a88"/>
<rect x="280.6" y="103.9" width="0.9" height="0.9" fill="#8c8a88"/>
<rect x="280.6" y="105.6" width="0.9" height="0.9" fill="#8c8a88"/>
<path d="M272.08 104.16 L273.92 104.16 L273 105.2 Z" fill="#c8c6c4"/><path d="M291.28 104.16 L293.12 104.16 L292.2 105.2 Z" fill="#c8c6c4"/>
<line x1="300" y1="102.6" x2="305.4" y2="102.6" stroke="#8c8a88" stroke-width="0.55"/><line x1="300" y1="104.3" x2="305.4" y2="104.3" stroke="#8c8a88" stroke-width="0.55"/><line x1="300" y1="106" x2="305.4" y2="106" stroke="#8c8a88" stroke-width="0.55"/><path d="M300 104.4 l1.4 -1 v2 z" fill="#8c8a88"/>
<line x1="312.6" y1="102.6" x2="318" y2="102.6" stroke="#8c8a88" stroke-width="0.55"/><line x1="312.6" y1="104.3" x2="318" y2="104.3" stroke="#8c8a88" stroke-width="0.55"/><line x1="312.6" y1="106" x2="318" y2="106" stroke="#8c8a88" stroke-width="0.55"/><path d="M313.8 104.4 l-1.4 -1 v2 z" fill="#8c8a88"/>
<line x1="326" y1="102.6" x2="330.6" y2="102.6" stroke="#8c8a88" stroke-width="0.55"/><line x1="326" y1="104.3" x2="330.6" y2="104.3" stroke="#8c8a88" stroke-width="0.55"/><line x1="326" y1="106" x2="330.6" y2="106" stroke="#8c8a88" stroke-width="0.55"/><path d="M324 102.4 V106.4" fill="none" stroke="#8c8a88" stroke-width="0.5"/>
<path d="M334.08 104.16 L335.92 104.16 L335 105.2 Z" fill="#c8c6c4"/>
<line x1="340.6" y1="99.8" x2="340.6" y2="128.6" stroke="#e3e0de" stroke-width="0.5"/>
<text x="345.6" y="104.05" font-size="4.6" fill="#8c8a88" text-anchor="middle">A</text><path d="M348.4 99.6 V104.8 M347.4 103.8 L348.4 104.9 L349.4 103.8" fill="none" stroke="#8c8a88" stroke-width="0.5"/>
<path d="M353.48 102.16 L355.32 102.16 L354.4 103.2 Z" fill="#c8c6c4"/>
<rect x="343.6" y="110.6" width="5.8" height="5.8" rx="0.4" fill="none" stroke="#8c8a88" stroke-width="0.55" stroke-dasharray="1 0.6"/>
<path d="M353.48 113.36 L355.32 113.36 L354.4 114.4 Z" fill="#c8c6c4"/>
<path d="M343.4 123.4 H347.4 L349.4 125.4 L347.4 127.4 H343.4 Z" fill="none" stroke="#8c8a88" stroke-width="0.55"/>
<path d="M353.48 125.16 L355.32 125.16 L354.4 126.2 Z" fill="#c8c6c4"/>
<line x1="261.2" y1="118.4" x2="266.8" y2="118.4" stroke="#8c8a88" stroke-width="0.55"/><line x1="261.2" y1="120.1" x2="266.8" y2="120.1" stroke="#8c8a88" stroke-width="0.55"/><line x1="261.2" y1="121.8" x2="266.8" y2="121.8" stroke="#8c8a88" stroke-width="0.55"/><line x1="274" y1="118.4" x2="279.6" y2="118.4" stroke="#8c8a88" stroke-width="0.55"/><line x1="274" y1="120.1" x2="279.6" y2="120.1" stroke="#8c8a88" stroke-width="0.55"/><line x1="274" y1="121.8" x2="279.6" y2="121.8" stroke="#8c8a88" stroke-width="0.55"/><line x1="285.4" y1="118.4" x2="291" y2="118.4" stroke="#8c8a88" stroke-width="0.55"/><line x1="285.4" y1="120.1" x2="291" y2="120.1" stroke="#8c8a88" stroke-width="0.55"/><line x1="285.4" y1="121.8" x2="291" y2="121.8" stroke="#8c8a88" stroke-width="0.55"/><line x1="297.4" y1="118.4" x2="303" y2="118.4" stroke="#8c8a88" stroke-width="0.55"/><line x1="297.4" y1="120.1" x2="303" y2="120.1" stroke="#8c8a88" stroke-width="0.55"/><line x1="297.4" y1="121.8" x2="303" y2="121.8" stroke="#8c8a88" stroke-width="0.55"/>
<line x1="306.6" y1="115.2" x2="306.6" y2="125.6" stroke="#e3e0de" stroke-width="0.6"/>
<line x1="310.6" y1="118.4" x2="312.8" y2="118.4" stroke="#8c8a88" stroke-width="0.55"/><line x1="310.6" y1="120.1" x2="312.8" y2="120.1" stroke="#8c8a88" stroke-width="0.55"/><line x1="310.6" y1="121.8" x2="312.8" y2="121.8" stroke="#8c8a88" stroke-width="0.55"/><line x1="313.6" y1="118.4" x2="315.8" y2="118.4" stroke="#8c8a88" stroke-width="0.55"/><line x1="313.6" y1="120.1" x2="315.8" y2="120.1" stroke="#8c8a88" stroke-width="0.55"/><line x1="313.6" y1="121.8" x2="315.8" y2="121.8" stroke="#8c8a88" stroke-width="0.55"/><path d="M320.08 120.16 L321.92 120.16 L321 121.2 Z" fill="#c8c6c4"/>
<text x="295" y="138.35" font-size="4.9" fill="#605e5c" textLength="19.4" lengthAdjust="spacingAndGlyphs">Paragraf</text>
<path d="M359 135.4 H361.6 M359 135.4 V138 M360.2 136.6 L362 138.4" fill="none" stroke="#aaa" stroke-width="0.45"/>
<rect x="371.2" y="98.2" width="7.2" height="7" rx="0.4" fill="#3c8fe0"/>
<circle cx="379.6" cy="106.4" r="4.2" fill="#fff" stroke="#555" stroke-width="0.8"/>
<text x="368.8" y="119.4" font-size="5.6" fill="#3a3a3a" textLength="18" lengthAdjust="spacingAndGlyphs">Şekiller</text>
<path d="M376.45 124.05 L378.75 124.05 L377.6 125.35 Z" fill="#555"/>
<rect x="393.6" y="98.8" width="5.8" height="5.6" rx="0.4" fill="#fff" stroke="#555" stroke-width="0.7"/>
<rect x="397" y="102" width="7.4" height="7.2" rx="0.4" fill="#f2b050" stroke="#e09030" stroke-width="0.5"/>
<rect x="402.4" y="107.2" width="4" height="3.8" rx="0.4" fill="#fff" stroke="#555" stroke-width="0.7"/>
<text x="390" y="119.4" font-size="5.6" fill="#3a3a3a" textLength="20" lengthAdjust="spacingAndGlyphs">Yerleştir</text>
<path d="M398.45 124.05 L400.75 124.05 L399.6 125.35 Z" fill="#555"/>
<rect x="416.6" y="98.6" width="12.8" height="12.2" rx="1.2" fill="#f6f5f4" stroke="#c9c7c5" stroke-width="0.7"/>
<path d="M421.6 110.4 L429.4 102.6 L429.4 106.4 L425.4 110.6 Z" fill="#d6d4d2"/>
<text x="417.4" y="119.4" font-size="5.6" fill="#b9b7b5" textLength="11.6" lengthAdjust="spacingAndGlyphs">Hızlı</text>
<text x="413.2" y="126.6" font-size="5.6" fill="#b9b7b5" textLength="17" lengthAdjust="spacingAndGlyphs">Stiller</text><path d="M432.48 124.16 L434.32 124.16 L433.4 125.2 Z" fill="#c8c6c4"/>
<path d="M450.28 100.96 L452.12 100.96 L451.2 102 Z" fill="#c8c6c4"/>
<path d="M450.28 112.96 L452.12 112.96 L451.2 114 Z" fill="#c8c6c4"/>
<path d="M450.28 124.76 L452.12 124.76 L451.2 125.8 Z" fill="#c8c6c4"/>
<path d="M438 102.4 L440.6 98.6 L443.2 102.4 Z" fill="none" stroke="#8f8d8b" stroke-width="0.55"/><line x1="437.6" y1="104.2" x2="443.6" y2="104.2" stroke="#b5b3b1" stroke-width="0.7"/>
<rect x="438" y="110.6" width="5.2" height="5.4" rx="0.4" fill="none" stroke="#a09e9c" stroke-width="0.55"/><path d="M440 114.4 L443.8 110.2" fill="none" stroke="#a09e9c" stroke-width="0.6"/>
<ellipse cx="440.6" cy="125.2" rx="2.8" ry="2.2" fill="none" stroke="#8f8d8b" stroke-width="0.6"/><circle cx="441.4" cy="125.6" r="1.1" fill="#c8c6c4"/>
<text x="402.6" y="138.35" font-size="4.9" fill="#605e5c" textLength="11.4" lengthAdjust="spacingAndGlyphs">Çizim</text>
<path d="M456.4 135.4 H459 M456.4 135.4 V138 M457.6 136.6 L459.4 138.4" fill="none" stroke="#aaa" stroke-width="0.45"/>
<circle cx="481.2" cy="102.2" r="3.7" fill="none" stroke="#555" stroke-width="0.7"/><line x1="478.6" y1="105" x2="474.6" y2="109.6" stroke="#555" stroke-width="0.7"/>
<text x="465.6" y="119.4" font-size="5.6" fill="#3a3a3a" textLength="28" lengthAdjust="spacingAndGlyphs">Düzenleme</text>
<path d="M478.05 124.05 L480.35 124.05 L479.2 125.35 Z" fill="#555"/>
<rect x="509.8" y="97.6" width="4.4" height="8.8" rx="2.2" fill="#4a9ae8"/>
<path d="M508 104.4 a4 4 0 0 0 8 0 M512 108.4 V110.6" fill="none" stroke="#555" stroke-width="0.7"/>
<text x="505" y="119.8" font-size="5.6" fill="#3a3a3a" textLength="13" lengthAdjust="spacingAndGlyphs">Dikte</text>
<path d="M510.45 124.45 L512.75 124.45 L511.6 125.75 Z" fill="#555"/>
<text x="508" y="138.75" font-size="4.9" fill="#605e5c" textLength="7.2" lengthAdjust="spacingAndGlyphs">Ses</text>
<path d="M539 99.8 L544.4 99 L547.4 108.4 L541.4 109.6 Z" fill="#f3f2f1" stroke="#c4c2c0" stroke-width="0.7"/>
<path d="M545 99.6 L548 97.2 M546.6 101 L549.4 99.6" fill="none" stroke="#c4c2c0" stroke-width="0.6"/>
<text x="531" y="119.8" font-size="5.6" fill="#b4b2b0" textLength="23" lengthAdjust="spacingAndGlyphs">Duyarlılık</text>
<path d="M541.48 124.16 L543.32 124.16 L542.4 125.2 Z" fill="#c8c6c4"/>
<text x="532" y="138.75" font-size="4.9" fill="#605e5c" textLength="19.2" lengthAdjust="spacingAndGlyphs">Duyarlılık</text>
<rect x="568.6" y="98" width="5.6" height="5.6" rx="0.8" fill="#fff" stroke="#e07a52" stroke-width="1.0"/>
<rect x="575.8" y="98" width="5.6" height="5.6" rx="0.8" fill="#fff" stroke="#e07a52" stroke-width="1.0"/>
<rect x="568.6" y="105.2" width="5.6" height="5.6" rx="0.8" fill="#fff" stroke="#e07a52" stroke-width="1.0"/>
<rect x="575.8" y="105.2" width="5.6" height="5.6" rx="0.8" fill="#fff" stroke="#e07a52" stroke-width="1.0"/>
<text x="564" y="119.8" font-size="5.6" fill="#3a3a3a" textLength="23" lengthAdjust="spacingAndGlyphs">Eklentiler</text>
<text x="565" y="138.75" font-size="4.9" fill="#605e5c" textLength="19.6" lengthAdjust="spacingAndGlyphs">Eklentiler</text>
<rect x="603.6" y="100.4" width="11" height="9" rx="0.4" fill="#fff" stroke="#555" stroke-width="0.8"/>
<rect x="605.4" y="102.4" width="7.2" height="5" fill="#d9d7d5"/>
<path d="M604.6 97 L601.6 102.4 H604 L602.6 106.4 L607 100.6 H604.4 L606 97 Z" fill="#f0a030"/>
<text x="597" y="119.8" font-size="5.6" fill="#3a3a3a" textLength="23" lengthAdjust="spacingAndGlyphs">Tasarımcı</text>
<g filter="url(#b05)">
<path d="M627.4 100 C629 97.6 632 97.8 633 99.6 L635 104 L630.6 108.8 C628 110.4 625.8 108 626.4 105.6 Z" fill="#3a86e8"/>
<path d="M633 99.6 C634.4 97.6 638 98.4 638.4 101 L637.8 105 C636.4 108 633.6 106.4 633.4 104 Z" fill="#e85aa8"/>
<path d="M630.6 108.8 C632 111 636 110.6 637 108 L637.8 105 L633.4 104 Z" fill="#f0a03a"/>
<path d="M631.4 103 L633.6 103 L633 106 L630.6 106.4 Z" fill="#8a5ae0"/>
</g>
<text x="624" y="119.8" font-size="5.6" fill="#3a3a3a" textLength="18" lengthAdjust="spacingAndGlyphs">Copilot</text>
<circle cx="660.8" cy="104.4" r="7.4" fill="#2f7be0"/>
<circle cx="660.8" cy="104.4" r="5.4" fill="#6fb0f4"/>
<path d="M656.4 106 C656.4 103.6 658.6 103.4 659.2 104 C659.6 101.6 663.4 101.8 663.4 104 C665.4 103.8 665.6 106 664.8 106.4 Z" fill="#2f7be0"/>
<text x="653.8" y="119.8" font-size="5.6" fill="#3a3a3a" textLength="13.8" lengthAdjust="spacingAndGlyphs">Word</text>
<text x="652.6" y="126.8" font-size="5.6" fill="#3a3a3a" textLength="17" lengthAdjust="spacingAndGlyphs">Clouds</text>
<text x="652.6" y="138.75" font-size="4.9" fill="#605e5c" textLength="16.4" lengthAdjust="spacingAndGlyphs">Options</text>
<path d="M718 133.6 L720 135.6 L722 133.6" fill="none" stroke="#444" stroke-width="0.6"/>
<rect x="176" y="143.4" width="473.8" height="6.4" fill="#fbfafa"/>
<text x="188.6" y="148.42" font-size="4.8" fill="#6a6866" text-anchor="middle">16</text>
<rect x="195.4" y="146.3" width="0.5" height="0.7" fill="#8a8886"/>
<text x="202.6" y="148.42" font-size="4.8" fill="#6a6866" text-anchor="middle">15</text>
<rect x="209.4" y="146.3" width="0.5" height="0.7" fill="#8a8886"/>
<text x="216.6" y="148.42" font-size="4.8" fill="#6a6866" text-anchor="middle">14</text>
<rect x="223.4" y="146.3" width="0.5" height="0.7" fill="#8a8886"/>
<text x="230.6" y="148.42" font-size="4.8" fill="#6a6866" text-anchor="middle">13</text>
<rect x="237.4" y="146.3" width="0.5" height="0.7" fill="#8a8886"/>
<text x="244.6" y="148.42" font-size="4.8" fill="#6a6866" text-anchor="middle">12</text>
<rect x="251.4" y="146.3" width="0.5" height="0.7" fill="#8a8886"/>
<text x="258.6" y="148.42" font-size="4.8" fill="#6a6866" text-anchor="middle">11</text>
<rect x="265.4" y="146.3" width="0.5" height="0.7" fill="#8a8886"/>
<text x="272.6" y="148.42" font-size="4.8" fill="#6a6866" text-anchor="middle">10</text>
<rect x="279.4" y="146.3" width="0.5" height="0.7" fill="#8a8886"/>
<text x="286.6" y="148.42" font-size="4.8" fill="#6a6866" text-anchor="middle">9</text>
<rect x="293.4" y="146.3" width="0.5" height="0.7" fill="#8a8886"/>
<text x="300.6" y="148.42" font-size="4.8" fill="#6a6866" text-anchor="middle">8</text>
<rect x="307.4" y="146.3" width="0.5" height="0.7" fill="#8a8886"/>
<text x="314.6" y="148.42" font-size="4.8" fill="#6a6866" text-anchor="middle">7</text>
<rect x="321.4" y="146.3" width="0.5" height="0.7" fill="#8a8886"/>
<text x="328.6" y="148.42" font-size="4.8" fill="#6a6866" text-anchor="middle">6</text>
<rect x="335.4" y="146.3" width="0.5" height="0.7" fill="#8a8886"/>
<text x="342.6" y="148.42" font-size="4.8" fill="#6a6866" text-anchor="middle">5</text>
<rect x="349.4" y="146.3" width="0.5" height="0.7" fill="#8a8886"/>
<text x="356.6" y="148.42" font-size="4.8" fill="#6a6866" text-anchor="middle">4</text>
<rect x="363.4" y="146.3" width="0.5" height="0.7" fill="#8a8886"/>
<text x="370.6" y="148.42" font-size="4.8" fill="#6a6866" text-anchor="middle">3</text>
<rect x="377.4" y="146.3" width="0.5" height="0.7" fill="#8a8886"/>
<text x="384.6" y="148.42" font-size="4.8" fill="#6a6866" text-anchor="middle">2</text>
<rect x="391.4" y="146.3" width="0.5" height="0.7" fill="#8a8886"/>
<text x="398.6" y="148.42" font-size="4.8" fill="#6a6866" text-anchor="middle">1</text>
<rect x="405.4" y="146.3" width="0.5" height="0.7" fill="#8a8886"/>
<text x="412.6" y="148.42" font-size="4.8" fill="#6a6866" text-anchor="middle">0</text>
<rect x="419.4" y="146.3" width="0.5" height="0.7" fill="#8a8886"/>
<text x="426.6" y="148.42" font-size="4.8" fill="#6a6866" text-anchor="middle">1</text>
<rect x="433.4" y="146.3" width="0.5" height="0.7" fill="#8a8886"/>
<text x="440.6" y="148.42" font-size="4.8" fill="#6a6866" text-anchor="middle">2</text>
<rect x="447.4" y="146.3" width="0.5" height="0.7" fill="#8a8886"/>
<text x="454.6" y="148.42" font-size="4.8" fill="#6a6866" text-anchor="middle">3</text>
<rect x="461.4" y="146.3" width="0.5" height="0.7" fill="#8a8886"/>
<text x="468.6" y="148.42" font-size="4.8" fill="#6a6866" text-anchor="middle">4</text>
<rect x="475.4" y="146.3" width="0.5" height="0.7" fill="#8a8886"/>
<text x="482.6" y="148.42" font-size="4.8" fill="#6a6866" text-anchor="middle">5</text>
<rect x="489.4" y="146.3" width="0.5" height="0.7" fill="#8a8886"/>
<text x="496.6" y="148.42" font-size="4.8" fill="#6a6866" text-anchor="middle">6</text>
<rect x="503.4" y="146.3" width="0.5" height="0.7" fill="#8a8886"/>
<text x="510.6" y="148.42" font-size="4.8" fill="#6a6866" text-anchor="middle">7</text>
<rect x="517.4" y="146.3" width="0.5" height="0.7" fill="#8a8886"/>
<text x="524.6" y="148.42" font-size="4.8" fill="#6a6866" text-anchor="middle">8</text>
<rect x="531.4" y="146.3" width="0.5" height="0.7" fill="#8a8886"/>
<text x="538.6" y="148.42" font-size="4.8" fill="#6a6866" text-anchor="middle">9</text>
<rect x="545.4" y="146.3" width="0.5" height="0.7" fill="#8a8886"/>
<text x="552.6" y="148.42" font-size="4.8" fill="#6a6866" text-anchor="middle">10</text>
<rect x="559.4" y="146.3" width="0.5" height="0.7" fill="#8a8886"/>
<text x="566.6" y="148.42" font-size="4.8" fill="#6a6866" text-anchor="middle">11</text>
<rect x="573.4" y="146.3" width="0.5" height="0.7" fill="#8a8886"/>
<text x="580.6" y="148.42" font-size="4.8" fill="#6a6866" text-anchor="middle">12</text>
<rect x="587.4" y="146.3" width="0.5" height="0.7" fill="#8a8886"/>
<text x="594.6" y="148.42" font-size="4.8" fill="#6a6866" text-anchor="middle">13</text>
<rect x="601.4" y="146.3" width="0.5" height="0.7" fill="#8a8886"/>
<text x="608.6" y="148.42" font-size="4.8" fill="#6a6866" text-anchor="middle">14</text>
<rect x="615.4" y="146.3" width="0.5" height="0.7" fill="#8a8886"/>
<text x="622.6" y="148.42" font-size="4.8" fill="#6a6866" text-anchor="middle">15</text>
<rect x="629.4" y="146.3" width="0.5" height="0.7" fill="#8a8886"/>
<text x="636.6" y="148.42" font-size="4.8" fill="#6a6866" text-anchor="middle">16</text>
<line x1="236.8" y1="143.6" x2="236.8" y2="149.6" stroke="#e8a0a8" stroke-width="0.5"/>
<rect x="92.2" y="158.8" width="6.2" height="267" fill="#fbfafa"/>
<text x="0" y="0" font-size="4.8" fill="#6a6866" text-anchor="middle" transform="translate(97.1 166.2) rotate(-90)">9</text>
<rect x="95" y="173.1" width="0.7" height="0.5" fill="#8a8886"/>
<text x="0" y="0" font-size="4.8" fill="#6a6866" text-anchor="middle" transform="translate(97.1 180.2) rotate(-90)">8</text>
<rect x="95" y="187.1" width="0.7" height="0.5" fill="#8a8886"/>
<text x="0" y="0" font-size="4.8" fill="#6a6866" text-anchor="middle" transform="translate(97.1 194.2) rotate(-90)">7</text>
<rect x="95" y="201.1" width="0.7" height="0.5" fill="#8a8886"/>
<text x="0" y="0" font-size="4.8" fill="#6a6866" text-anchor="middle" transform="translate(97.1 208.2) rotate(-90)">6</text>
<rect x="95" y="215.1" width="0.7" height="0.5" fill="#8a8886"/>
<text x="0" y="0" font-size="4.8" fill="#6a6866" text-anchor="middle" transform="translate(97.1 222.2) rotate(-90)">5</text>
<rect x="95" y="229.1" width="0.7" height="0.5" fill="#8a8886"/>
<text x="0" y="0" font-size="4.8" fill="#6a6866" text-anchor="middle" transform="translate(97.1 236.2) rotate(-90)">4</text>
<rect x="95" y="243.1" width="0.7" height="0.5" fill="#8a8886"/>
<text x="0" y="0" font-size="4.8" fill="#6a6866" text-anchor="middle" transform="translate(97.1 250.2) rotate(-90)">3</text>
<rect x="95" y="257.1" width="0.7" height="0.5" fill="#8a8886"/>
<text x="0" y="0" font-size="4.8" fill="#6a6866" text-anchor="middle" transform="translate(97.1 264.2) rotate(-90)">2</text>
<rect x="95" y="271.1" width="0.7" height="0.5" fill="#8a8886"/>
<text x="0" y="0" font-size="4.8" fill="#6a6866" text-anchor="middle" transform="translate(97.1 278.2) rotate(-90)">1</text>
<rect x="95" y="285.1" width="0.7" height="0.5" fill="#8a8886"/>
<text x="0" y="0" font-size="4.8" fill="#6a6866" text-anchor="middle" transform="translate(97.1 292.2) rotate(-90)">0</text>
<rect x="95" y="299.1" width="0.7" height="0.5" fill="#8a8886"/>
<text x="0" y="0" font-size="4.8" fill="#6a6866" text-anchor="middle" transform="translate(97.1 306.2) rotate(-90)">1</text>
<rect x="95" y="313.1" width="0.7" height="0.5" fill="#8a8886"/>
<text x="0" y="0" font-size="4.8" fill="#6a6866" text-anchor="middle" transform="translate(97.1 320.2) rotate(-90)">2</text>
<rect x="95" y="327.1" width="0.7" height="0.5" fill="#8a8886"/>
<text x="0" y="0" font-size="4.8" fill="#6a6866" text-anchor="middle" transform="translate(97.1 334.2) rotate(-90)">3</text>
<rect x="95" y="341.1" width="0.7" height="0.5" fill="#8a8886"/>
<text x="0" y="0" font-size="4.8" fill="#6a6866" text-anchor="middle" transform="translate(97.1 348.2) rotate(-90)">4</text>
<rect x="95" y="355.1" width="0.7" height="0.5" fill="#8a8886"/>
<text x="0" y="0" font-size="4.8" fill="#6a6866" text-anchor="middle" transform="translate(97.1 362.2) rotate(-90)">5</text>
<rect x="95" y="369.1" width="0.7" height="0.5" fill="#8a8886"/>
<text x="0" y="0" font-size="4.8" fill="#6a6866" text-anchor="middle" transform="translate(97.1 376.2) rotate(-90)">6</text>
<rect x="95" y="383.1" width="0.7" height="0.5" fill="#8a8886"/>
<text x="0" y="0" font-size="4.8" fill="#6a6866" text-anchor="middle" transform="translate(97.1 390.2) rotate(-90)">7</text>
<rect x="95" y="397.1" width="0.7" height="0.5" fill="#8a8886"/>
<text x="0" y="0" font-size="4.8" fill="#6a6866" text-anchor="middle" transform="translate(97.1 404.2) rotate(-90)">8</text>
<rect x="95" y="411.1" width="0.7" height="0.5" fill="#8a8886"/>
<text x="0" y="0" font-size="4.8" fill="#6a6866" text-anchor="middle" transform="translate(97.1 418.2) rotate(-90)">9</text>
<line x1="92.4" y1="323.6" x2="98.2" y2="323.6" stroke="#e8a0a8" stroke-width="0.5"/>
<rect x="723.4" y="143" width="7" height="290" fill="#f6f3f2"/>
<path d="M725 146.6 L726.8 144.2 L728.6 146.6 Z" fill="#555"/>
<rect x="725.2" y="169" width="3.2" height="27" rx="1.5" fill="#6e6e6e"/>
<path d="M725 401.8 L726.8 404.4 L728.6 401.8 Z" fill="#555"/>
<path d="M725.2 411 L726.8 409 L728.4 411 Z M725.2 413.6 L726.8 411.6 L728.4 413.6 Z" fill="#555"/>
<path d="M725.2 416.6 L726.8 418.6 L728.4 416.6 Z M725.2 419.2 L726.8 421.2 L728.4 419.2 Z" fill="#555"/>
<path d="M4.2 433.4 H730.4 V439.6 a3.8 3.8 0 0 1 -3.8 3.8 H7.6 a3.4 3.4 0 0 1 -3.4 -3.4 Z" fill="#f7f5f4"/>
<text x="9" y="440.75" font-size="4.9" fill="#55534f" textLength="23.8" lengthAdjust="spacingAndGlyphs">Slayt 2 / 11</text>
<text x="50" y="440.75" font-size="4.9" fill="#55534f" textLength="34" lengthAdjust="spacingAndGlyphs">Türkçe (Türkiye)</text>
<circle cx="95.4" cy="436.6" r="0.7" fill="#55534f"/><path d="M93.6 437.8 H97.2 M95.4 437.8 V439.6 M94.4 441 L95.4 439.4 L96.4 441" fill="none" stroke="#55534f" stroke-width="0.5"/>
<text x="100.8" y="440.75" font-size="4.9" fill="#55534f" textLength="57" lengthAdjust="spacingAndGlyphs">Erişilebilirlik: Her şey hazır</text>
<path d="M531.6 438.2 H535.8 M531.6 439.4 H535.8 M531.6 440.6 H535.8 M532.6 437 L533.7 435.8 L534.8 437" fill="none" stroke="#55534f" stroke-width="0.45"/>
<text x="538.4" y="440.75" font-size="4.9" fill="#55534f" textLength="14" lengthAdjust="spacingAndGlyphs">Notlar</text>
<rect x="562" y="433.6" width="19.2" height="9.2" fill="#dad5d3"/>
<rect x="567.6" y="435.6" width="7.4" height="5.6" rx="0.4" fill="none" stroke="#55534f" stroke-width="0.6"/><rect x="569.6" y="437.2" width="3.4" height="2.4" fill="#8a8886"/>
<rect x="587.6" y="435.4" width="2.4" height="2.4" fill="none" stroke="#55534f" stroke-width="0.5"/>
<rect x="591.2" y="435.4" width="2.4" height="2.4" fill="none" stroke="#55534f" stroke-width="0.5"/>
<rect x="587.6" y="439" width="2.4" height="2.4" fill="none" stroke="#55534f" stroke-width="0.5"/>
<rect x="591.2" y="439" width="2.4" height="2.4" fill="none" stroke="#55534f" stroke-width="0.5"/>
<rect x="606" y="435.2" width="6.4" height="6.4" rx="0.4" fill="#8a8886"/><line x1="609.2" y1="435.2" x2="609.2" y2="441.6" stroke="#f4f1f0" stroke-width="0.5"/>
<rect x="625" y="435.4" width="6.4" height="4" fill="none" stroke="#55534f" stroke-width="0.55"/><path d="M628.2 439.4 V441.4 M626.6 441.6 H629.8" fill="none" stroke="#55534f" stroke-width="0.5"/>
<line x1="640.6" y1="438.4" x2="643.6" y2="438.4" stroke="#55534f" stroke-width="0.5"/>
<line x1="647" y1="438.4" x2="693" y2="438.4" stroke="#a8a6a4" stroke-width="0.5"/>
<rect x="664.2" y="436" width="1.6" height="4.8" rx="0.4" fill="#4a4846"/>
<line x1="670" y1="437.6" x2="670" y2="439.2" stroke="#8a8886" stroke-width="0.5"/>
<path d="M696.6 438.4 H699.6 M698.1 436.9 V439.9" fill="none" stroke="#55534f" stroke-width="0.5"/>
<text x="706" y="440.75" font-size="4.9" fill="#55534f" textLength="9.4" lengthAdjust="spacingAndGlyphs">79%</text>
<path d="M722.4 438.4 L725 435.8 L727.6 438.4 L725 441 Z" fill="none" stroke="#55534f" stroke-width="0.6"/>
</g>
<!-- p_slide -->
<g id="slide" filter="url(#b03)">
<rect x="174.4" y="158.4" width="475.8" height="267.8" fill="#d8d2cf" filter="url(#b05)"/>
<rect x="174.8" y="158.8" width="475" height="267" fill="#fff"/>
<rect x="174.8" y="158.8" width="37.2" height="267" fill="#062d60"/>
<rect x="186.2" y="165.4" width="14.8" height="14.8" rx="1.63" fill="#fff"/><path d="M188.18 171.16 Q191.68 169.64 193.6 167.38 Q195.52 169.64 199.02 171.16" fill="none" stroke="#062d60" stroke-width="1.02" stroke-linecap="round"/><path d="M193.49 172.12 L196.76 175.29 L193.49 178.45 L190.21 175.29 Z" fill="none" stroke="#062d60" stroke-width="1.53" stroke-linejoin="miter"/><circle cx="193.43" cy="171.16" r="0.85" fill="#062d60"/>
<text x="181" y="190" font-size="6.6" fill="#e8ecf2" class="sf" textLength="25.6" lengthAdjust="spacingAndGlyphs"><tspan font-size="7.3">T</tspan>ARSUS</text>
<text x="181.4" y="193.02" font-size="2.3" fill="#b9c4d6" class="sf" textLength="24.8" lengthAdjust="spacingAndGlyphs">ÜNİVERSİTESİ</text>
<text x="238" y="191.62" font-size="7.6" fill="#1c1c1c" textLength="236" lengthAdjust="spacingAndGlyphs" stroke="#1c1c1c" stroke-width="0.18">YAPAY ZEKÂ KULLANIMINDA DÜNYADAKİ GÖRÜŞLER, ETİK VE</text>
<text x="238" y="202.42" font-size="7.6" fill="#1c1c1c" textLength="41.6" lengthAdjust="spacingAndGlyphs" stroke="#1c1c1c" stroke-width="0.18">SINIRLAR.</text>
<circle cx="351" cy="226.5" r="1" fill="#1a1a1a"/>
<text x="360.8" y="228.65" font-size="7.4" fill="#1a1a1a" textLength="126.5" lengthAdjust="spacingAndGlyphs" stroke="#1a1a1a" stroke-width="0.12">Bilgilerinizi ve gizli verileri koruyun.</text>
<circle cx="351" cy="237.1" r="1" fill="#1a1a1a"/>
<text x="360.8" y="239.25" font-size="7.4" fill="#1a1a1a" textLength="211.2" lengthAdjust="spacingAndGlyphs" stroke="#1a1a1a" stroke-width="0.12">Yapay zeka tarafından üretilen bilgileri yayımlamadan önce</text>
<text x="360.8" y="250.05" font-size="7.4" fill="#1a1a1a" textLength="94.2" lengthAdjust="spacingAndGlyphs" stroke="#1a1a1a" stroke-width="0.12">doğruluğunu kontrol edin.</text>
<circle cx="351" cy="258.8" r="1" fill="#1a1a1a"/>
<text x="360.8" y="260.95" font-size="7.4" fill="#1a1a1a" textLength="212.2" lengthAdjust="spacingAndGlyphs" stroke="#1a1a1a" stroke-width="0.12">Yapay zeka araçlarını kullandığınızı şeffaf bir şekilde belirtin</text>
<circle cx="351" cy="269.7" r="1" fill="#1a1a1a"/>
<text x="360.8" y="271.85" font-size="7.4" fill="#1a1a1a" textLength="89.8" lengthAdjust="spacingAndGlyphs" stroke="#1a1a1a" stroke-width="0.12">Fikir bulmak için Kullanın</text>
<circle cx="351" cy="280.3" r="1" fill="#1a1a1a"/>
<text x="360.8" y="282.45" font-size="7.4" fill="#1a1a1a" textLength="115.6" lengthAdjust="spacingAndGlyphs" stroke="#1a1a1a" stroke-width="0.12">Kaynaklara ulaşmak için kullanın</text>
<circle cx="351" cy="291.1" r="1" fill="#1a1a1a"/>
<text x="360.8" y="293.25" font-size="7.4" fill="#1a1a1a" textLength="250.6" lengthAdjust="spacingAndGlyphs" stroke="#1a1a1a" stroke-width="0.12">100% Yapay zeka tarafından yazılan içeriği veya yaratılan görseli hiçbir</text>
<text x="360.8" y="303.95" font-size="7.4" fill="#1a1a1a" textLength="69.2" lengthAdjust="spacingAndGlyphs" stroke="#1a1a1a" stroke-width="0.12">yerde yayınlamayın</text>
<text x="360.8" y="336.35" font-size="7.4" fill="#1a1a1a" textLength="208.2" lengthAdjust="spacingAndGlyphs" stroke="#1a1a1a" stroke-width="0.12">dillere çevirme ve eğitim alma, yazılan metinleri düzeltme</text>
<circle cx="351" cy="323.3" r="1" fill="#1a1a1a"/>
<text x="360.8" y="325.45" font-size="7.4" fill="#111" class="b" textLength="90.6" lengthAdjust="spacingAndGlyphs">Uzak doğuda bunlara ek:</text>
<text x="455.6" y="325.45" font-size="7.4" fill="#1a1a1a" textLength="138.8" lengthAdjust="spacingAndGlyphs" stroke="#1a1a1a" stroke-width="0.12">Kaynak kodları optimize etme, yabancı</text>
<text x="350.8" y="370.15" font-size="7.4" fill="#1a1a1a" textLength="78.8" lengthAdjust="spacingAndGlyphs">Harvard Universitesi (</text>
<text x="429.6" y="370.15" font-size="7.4" fill="#1f6fc4" textLength="80" lengthAdjust="spacingAndGlyphs">www.huit.harvard.edu</text><line x1="429.6" y1="371.1" x2="509.6" y2="371.1" stroke="#1f6fc4" stroke-width="0.45"/>
<text x="509.6" y="370.15" font-size="7.4" fill="#1a1a1a">)</text>
<text x="350.8" y="381.05" font-size="7.4" fill="#1a1a1a" textLength="18.8" lengthAdjust="spacingAndGlyphs">MIT (</text>
<text x="369.6" y="381.05" font-size="7.4" fill="#1f6fc4" textLength="39" lengthAdjust="spacingAndGlyphs">ist.mit.edu</text><line x1="369.6" y1="382" x2="408.6" y2="382" stroke="#1f6fc4" stroke-width="0.45"/>
<text x="408.6" y="381.05" font-size="7.4" fill="#1a1a1a">)</text>
<text x="350.8" y="391.55" font-size="7.4" fill="#1a1a1a" textLength="43.4" lengthAdjust="spacingAndGlyphs">Cambridge (</text>
<text x="394.2" y="391.55" font-size="7.4" fill="#1f6fc4" textLength="119.4" lengthAdjust="spacingAndGlyphs">www.communications.cam.ac.uk</text><line x1="394.2" y1="392.5" x2="513.6" y2="392.5" stroke="#1f6fc4" stroke-width="0.45"/>
<text x="350.8" y="402.35" font-size="7.4" fill="#1a1a1a" textLength="111.8" lengthAdjust="spacingAndGlyphs">National Sun Yat-sen University</text>
<text x="464.6" y="402.35" font-size="7.4" fill="#1f6fc4" textLength="64" lengthAdjust="spacingAndGlyphs">oaa.nsysu.edu.tw</text><line x1="464.6" y1="403.3" x2="528.6" y2="403.3" stroke="#1f6fc4" stroke-width="0.45"/>
<line x1="383.6" y1="371.2" x2="426.4" y2="371.2" stroke="#e0403a" stroke-width="0.45" stroke-dasharray="1 0.6"/>
<line x1="350.8" y1="403.4" x2="381.4" y2="403.4" stroke="#e0403a" stroke-width="0.45" stroke-dasharray="1 0.6"/>
<line x1="427.4" y1="403.4" x2="462.4" y2="403.4" stroke="#e0403a" stroke-width="0.45" stroke-dasharray="1 0.6"/>
<g filter="url(#b03)">
<path d="M254.34 257.45 A60.2 60.2 0 0 1 296.14 251.94 L297.06 245.38 L308.98 267.72 L290.22 276.23 L291.49 272.11 A39.5 39.5 0 0 0 264.06 275.72 L267.04 262.71 Z" fill="#3a3a3c" stroke="#2f2f31" stroke-width="0.7"/>
<path d="M306.54 255.36 A60.2 60.2 0 0 1 336.9 284.62 L342.6 281.24 L332.58 304.49 L314.22 295.13 L318.23 293.55 A39.5 39.5 0 0 0 298.31 274.36 L310.34 268.58 Z" fill="#4c9cdc" stroke="#3d8bd0" stroke-width="0.7"/>
<path d="M340.71 294.87 A60.2 60.2 0 0 1 336.77 336.85 L342.96 339.21 L318.54 345.86 L314.41 325.67 L318.15 327.83 A39.5 39.5 0 0 0 320.73 300.28 L332.75 306.09 Z" fill="#4c9cdc" stroke="#3d8bd0" stroke-width="0.7"/>
<path d="M331.13 346.23 A60.2 60.2 0 0 1 295.85 369.32 L297.87 375.63 L277.44 360.68 L290.65 344.87 L291.29 349.13 A39.5 39.5 0 0 0 314.44 333.98 L317.4 346.99 Z" fill="#4c9cdc" stroke="#3d8bd0" stroke-width="0.7"/>
<path d="M285 370.75 A60.2 60.2 0 0 1 244.95 357.57 L241.28 363.08 L240.22 337.79 L260.83 338.26 L257.9 341.42 A39.5 39.5 0 0 0 284.18 350.07 L275.84 360.49 Z" fill="#4c9cdc" stroke="#3d8bd0" stroke-width="0.7"/>
<path d="M237.07 349.98 A60.2 60.2 0 0 1 222.4 310.45 L215.8 311.02 L234.92 294.42 L247.4 310.82 L243.1 310.5 A39.5 39.5 0 0 0 252.72 336.44 L239.38 336.42 Z" fill="#4c9cdc" stroke="#3d8bd0" stroke-width="0.7"/>
<path d="M223.42 299.56 A60.2 60.2 0 0 1 245.18 263.44 L240.63 258.63 L265.52 263.24 L260.48 283.22 L258.05 279.66 A39.5 39.5 0 0 0 243.77 303.35 L235.46 292.91 Z" fill="#4c9cdc" stroke="#3d8bd0" stroke-width="0.7"/>
</g>
<text x="0" y="1.5" font-size="4.9" fill="#fff" class="b" text-anchor="middle" transform="translate(284.4 257.8) rotate(9)">A.I.</text>
<text x="0" y="1.5" font-size="4.9" fill="#fff" class="b" text-anchor="middle" transform="translate(285.6 265) rotate(9)">Kullanımı</text>
<text x="0" y="1.5" font-size="4.9" fill="#fff" class="b" text-anchor="middle" transform="translate(321 281.8) rotate(53)">Etik Sor.</text>
<text x="0" y="1.5" font-size="4.9" fill="#fff" class="b" text-anchor="middle" transform="translate(331.4 319.2) rotate(100)">Dizayn</text>
<text x="0" y="1.5" font-size="4.9" fill="#fff" class="b" text-anchor="middle" transform="translate(302.8 347.8) rotate(-37)">Literatür</text>
<text x="0" y="1.5" font-size="4.9" fill="#fff" class="b" text-anchor="middle" transform="translate(307.4 353.4) rotate(-37)">Kayn. çer.</text>
<text x="0" y="1.5" font-size="4.9" fill="#fff" class="b" text-anchor="middle" transform="translate(262.2 350.6) rotate(31)">Review</text>
<text x="0" y="1.5" font-size="4.9" fill="#fff" class="b" text-anchor="middle" transform="translate(238.2 320.2) rotate(82)">Problem</text>
<text x="0" y="1.5" font-size="4.9" fill="#fff" class="b" text-anchor="middle" transform="translate(232.4 321.4) rotate(82)">Hipotez</text>
<text x="0" y="1.5" font-size="4.9" fill="#fff" class="b" text-anchor="middle" transform="translate(245.2 278.2) rotate(-52)">Analiz</text>
<text x="0" y="1.5" font-size="4.9" fill="#fff" class="b" text-anchor="middle" transform="translate(250.8 283.4) rotate(-52)">yazım</text>
<rect x="271.1" y="280.9" width="26.2" height="26.2" rx="2.88" fill="#1f3d6b"/><path d="M274.6 291.1 Q280.8 288.4 284.2 284.4 Q287.6 288.4 293.8 291.1" fill="none" stroke="#fff" stroke-width="1.8" stroke-linecap="round"/><path d="M284 292.8 L289.8 298.4 L284 304 L278.2 298.4 Z" fill="none" stroke="#fff" stroke-width="2.7" stroke-linejoin="miter"/><circle cx="283.9" cy="291.1" r="1.5" fill="#fff"/>
<text x="262.2" y="322" font-size="10.9" fill="#3f526e" stroke="#3f526e" stroke-width="0.15" class="sf" textLength="45" lengthAdjust="spacingAndGlyphs"><tspan font-size="13.2">T</tspan>ARSUS</text>
<text x="262.4" y="330.4" font-size="5.3" fill="#64779a" class="sf" textLength="45" lengthAdjust="spacingAndGlyphs">ÜNİVERSİTESİ</text>
</g>
<!-- p_thumbs -->
<g id="thumbs" filter="url(#b03)">
<clipPath id="cpTh"><rect x="4" y="143" width="84" height="290"/></clipPath>
<g clip-path="url(#cpTh)">
<text x="10.8" y="155.52" font-size="7.6" fill="#6a6866" text-anchor="middle">1</text>
<text x="10.8" y="161.8" font-size="5.6" fill="#4a4846" text-anchor="middle">★</text>
<text x="10.8" y="194.12" font-size="7.6" fill="#d24726" text-anchor="middle">2</text>
<text x="10.8" y="200.4" font-size="5.6" fill="#4a4846" text-anchor="middle">★</text>
<text x="10.8" y="232.72" font-size="7.6" fill="#6a6866" text-anchor="middle">3</text>
<text x="10.8" y="239" font-size="5.6" fill="#4a4846" text-anchor="middle">★</text>
<text x="10.8" y="270.92" font-size="7.6" fill="#6a6866" text-anchor="middle">4</text>
<text x="10.8" y="277.2" font-size="5.6" fill="#4a4846" text-anchor="middle">★</text>
<text x="10.8" y="308.92" font-size="7.6" fill="#6a6866" text-anchor="middle">5</text>
<text x="10.8" y="315.2" font-size="5.6" fill="#4a4846" text-anchor="middle">★</text>
<text x="10.8" y="347.42" font-size="7.6" fill="#6a6866" text-anchor="middle">6</text>
<text x="10.8" y="353.7" font-size="5.6" fill="#4a4846" text-anchor="middle">★</text>
<text x="10.8" y="385.92" font-size="7.6" fill="#6a6866" text-anchor="middle">7</text>
<text x="10.8" y="392.2" font-size="5.6" fill="#4a4846" text-anchor="middle">★</text>
<text x="10.8" y="424.12" font-size="7.6" fill="#6a6866" text-anchor="middle">8</text>
<text x="10.8" y="430.4" font-size="5.6" fill="#4a4846" text-anchor="middle">★</text>
<rect x="20" y="150.4" width="50.5" height="28.4" rx="1.4" fill="#fff" stroke="#ddd6d3" stroke-width="0.5"/>
<path d="M21.4 150.4 H69.1 a1.4 1.4 0 0 1 1.4 1.4 V159.6 H20 V151.8 a1.4 1.4 0 0 1 1.4 -1.4 Z" fill="#062d60"/>
<rect x="44.2" y="153.4" width="2.6" height="2.6" rx="0.4" fill="#fff"/>
<line x1="43.4" y1="157.4" x2="47.6" y2="157.4" stroke="#b9c4d6" stroke-width="0.5"/>
<text x="45.4" y="165.7" font-size="2.5" fill="#1d3a6e" text-anchor="middle" class="b" textLength="34" lengthAdjust="spacingAndGlyphs">Yapay Zekâ ve Bilimsel Araştırma</text>
<text x="45.4" y="168.9" font-size="2.5" fill="#1d3a6e" text-anchor="middle" class="b" textLength="7" lengthAdjust="spacingAndGlyphs">Süreci</text>
<line x1="42.4" y1="170.8" x2="48.6" y2="170.8" stroke="#8a8a8a" stroke-width="0.4" opacity="0.7"/>
<line x1="26" y1="175.2" x2="66" y2="175.2" stroke="#c9d2e0" stroke-width="0.4" opacity="0.7"/>
<rect x="18.9" y="187.8" width="53.2" height="30.8" rx="2.2" fill="#fff" stroke="#a4373a" stroke-width="1.3"/>
<clipPath id="cpTh2"><rect x="20" y="189" width="50.5" height="28.4" rx="1.2"/></clipPath>
<g clip-path="url(#cpTh2)">
<rect x="20" y="189" width="50.5" height="28.4" rx="1.4" fill="#fff" stroke="#ddd6d3" stroke-width="0.5"/><path d="M21.4 189 H23.8 V217.4 H21.4 a1.4 1.4 0 0 1 -1.4 -1.4 V190.4 a1.4 1.4 0 0 1 1.4 -1.4 Z" fill="#062d60"/><rect x="21.2" y="190" width="1.4" height="1.4" fill="#fff" opacity="0.8"/>
<line x1="27" y1="192.4" x2="52" y2="192.4" stroke="#444" stroke-width="0.5" opacity="0.7"/><line x1="27" y1="193.6" x2="31.6" y2="193.6" stroke="#444" stroke-width="0.5" opacity="0.7"/>
<circle cx="31.8" cy="204.3" r="5" fill="none" stroke="#4c9cdc" stroke-width="2.7"/><path d="M29.6 199.7 A5.1 5.1 0 0 1 34.2 199.8" fill="none" stroke="#2a2a2c" stroke-width="2.5"/><rect x="30.6" y="202.2" width="2.4" height="2.4" rx="0.3" fill="#1d3a6e"/><line x1="30" y1="205.8" x2="33.6" y2="205.8" stroke="#6a7a90" stroke-width="0.5"/>
<line x1="39.6" y1="196.2" x2="53" y2="196.2" stroke="#555" stroke-width="0.45" opacity="0.65"/>
<line x1="39.6" y1="197.35" x2="62" y2="197.35" stroke="#555" stroke-width="0.45" opacity="0.65"/>
<line x1="40.6" y1="198.5" x2="50" y2="198.5" stroke="#555" stroke-width="0.45" opacity="0.65"/>
<line x1="39.6" y1="199.65" x2="62.4" y2="199.65" stroke="#555" stroke-width="0.45" opacity="0.65"/>
<line x1="39.6" y1="200.8" x2="49.6" y2="200.8" stroke="#555" stroke-width="0.45" opacity="0.65"/>
<line x1="39.6" y1="201.95" x2="52.4" y2="201.95" stroke="#555" stroke-width="0.45" opacity="0.65"/>
<line x1="39.6" y1="203.1" x2="66" y2="203.1" stroke="#555" stroke-width="0.45" opacity="0.65"/>
<line x1="40.6" y1="204.25" x2="46" y2="204.25" stroke="#555" stroke-width="0.45" opacity="0.65"/>
<line x1="39.6" y1="206.4" x2="64.6" y2="206.4" stroke="#555" stroke-width="0.45" opacity="0.65"/><line x1="40.6" y1="207.6" x2="61.6" y2="207.6" stroke="#555" stroke-width="0.45" opacity="0.65"/>
<line x1="38.6" y1="211.2" x2="55.6" y2="211.2" stroke="#2a62b0" stroke-width="0.6" opacity="0.8"/><line x1="38.6" y1="212.4" x2="44.6" y2="212.4" stroke="#2a62b0" stroke-width="0.6" opacity="0.8"/><line x1="38.6" y1="213.6" x2="56.6" y2="213.6" stroke="#2a62b0" stroke-width="0.6" opacity="0.8"/><line x1="38.6" y1="214.8" x2="58.6" y2="214.8" stroke="#2a62b0" stroke-width="0.6" opacity="0.8"/>
</g>
<rect x="20" y="227.6" width="50.5" height="28.4" rx="1.4" fill="#fff" stroke="#ddd6d3" stroke-width="0.5"/><path d="M21.4 227.6 H23.8 V256 H21.4 a1.4 1.4 0 0 1 -1.4 -1.4 V229 a1.4 1.4 0 0 1 1.4 -1.4 Z" fill="#062d60"/><rect x="21.2" y="228.6" width="1.4" height="1.4" fill="#fff" opacity="0.8"/>
<line x1="27" y1="231" x2="56" y2="231" stroke="#1d3a6e" stroke-width="0.6" opacity="0.8"/><line x1="41" y1="233" x2="66" y2="233" stroke="#8a9ab0" stroke-width="0.4" opacity="0.8"/><line x1="41" y1="234.6" x2="55" y2="234.6" stroke="#2a62b0" stroke-width="0.7" opacity="0.8"/>
<circle cx="32.3" cy="243.1" r="5" fill="none" stroke="#4c9cdc" stroke-width="2.7"/><path d="M30.1 238.5 A5.1 5.1 0 0 1 34.7 238.6" fill="none" stroke="#2a2a2c" stroke-width="2.5"/><rect x="31.1" y="241" width="2.4" height="2.4" rx="0.3" fill="#1d3a6e"/><line x1="30.5" y1="244.6" x2="34.1" y2="244.6" stroke="#6a7a90" stroke-width="0.5"/>
<line x1="27" y1="252.2" x2="52" y2="252.2" stroke="#aab" stroke-width="0.4" opacity="0.6"/><line x1="27" y1="253.4" x2="42" y2="253.4" stroke="#aab" stroke-width="0.4" opacity="0.6"/>
<g filter="url(#b03)">
<path d="M43.6 248.8 L54.4 235.8 L62.8 242.6 L62.8 253.6 L57.6 253.6 Z" fill="#3f8ed0"/>
<path d="M46.6 249 L56 238" fill="none" stroke="#1c1c1e" stroke-width="1.5"/>
<path d="M49.6 250.05 L57.65 241" fill="none" stroke="#1c1c1e" stroke-width="1.5"/>
<path d="M52.6 251.1 L59.3 244" fill="none" stroke="#1c1c1e" stroke-width="1.5"/>
<path d="M55.6 252.15 L60.95 247" fill="none" stroke="#1c1c1e" stroke-width="1.5"/>
<path d="M54.4 235.8 L63 243 L63 253.6" fill="none" stroke="#e87a2a" stroke-width="1.4"/>
<path d="M57 241 L62.6 246 M58.6 245 L62.6 249.2" fill="none" stroke="#e87a2a" stroke-width="1"/>
</g>
<rect x="20" y="265.8" width="50.5" height="28.4" rx="1.4" fill="#fff" stroke="#ddd6d3" stroke-width="0.5"/><path d="M21.4 265.8 H23.8 V294.2 H21.4 a1.4 1.4 0 0 1 -1.4 -1.4 V267.2 a1.4 1.4 0 0 1 1.4 -1.4 Z" fill="#062d60"/><rect x="21.2" y="266.8" width="1.4" height="1.4" fill="#fff" opacity="0.8"/>
<line x1="27" y1="269.4" x2="50.6" y2="269.4" stroke="#1d3a6e" stroke-width="0.6" opacity="0.8"/>
<circle cx="32.3" cy="281.4" r="5" fill="none" stroke="#4c9cdc" stroke-width="2.7"/><path d="M30.1 276.8 A5.1 5.1 0 0 1 34.7 276.9" fill="none" stroke="#2a2a2c" stroke-width="2.5"/><rect x="31.1" y="279.3" width="2.4" height="2.4" rx="0.3" fill="#1d3a6e"/><line x1="30.5" y1="282.9" x2="34.1" y2="282.9" stroke="#6a7a90" stroke-width="0.5"/>
<circle cx="27.6" cy="290.2" r="0.55" fill="#444"/><path d="M26.8 293.2 L27.6 290.7 L28.4 293.2 Z" fill="#444"/><circle cx="31.4" cy="290.2" r="0.55" fill="#444"/><path d="M30.6 293.2 L31.4 290.7 L32.2 293.2 Z" fill="#444"/><circle cx="35.2" cy="290.2" r="0.55" fill="#444"/><path d="M34.4 293.2 L35.2 290.7 L36 293.2 Z" fill="#444"/>
<line x1="44" y1="272.2" x2="64" y2="272.2" stroke="#8a9ab0" stroke-width="0.4" opacity="0.8"/>
<rect x="44.2" y="275" width="8" height="3.2" rx="0.2" fill="#3a72c8"/>
<rect x="57.4" y="282.8" width="10" height="6.6" rx="0.3" fill="#5a4a3a"/><rect x="58.4" y="283.6" width="8" height="4.8" fill="#b08050"/><rect x="59" y="284.6" width="3" height="3" fill="#4a6a8a"/><rect x="62.8" y="284.6" width="3" height="3" fill="#3a7a5a"/><path d="M57.4 289.4 H67.4 L68.8 290.8 H56 Z" fill="#8a8a8a"/>
<rect x="20" y="303.8" width="50.5" height="28.4" rx="1.4" fill="#fff" stroke="#ddd6d3" stroke-width="0.5"/><path d="M21.4 303.8 H23.8 V332.2 H21.4 a1.4 1.4 0 0 1 -1.4 -1.4 V305.2 a1.4 1.4 0 0 1 1.4 -1.4 Z" fill="#062d60"/><rect x="21.2" y="304.8" width="1.4" height="1.4" fill="#fff" opacity="0.8"/>
<line x1="27" y1="307.4" x2="50.6" y2="307.4" stroke="#1d3a6e" stroke-width="0.6" opacity="0.8"/>
<circle cx="32.3" cy="319.4" r="5" fill="none" stroke="#4c9cdc" stroke-width="2.7"/><path d="M30.1 314.8 A5.1 5.1 0 0 1 34.7 314.9" fill="none" stroke="#2a2a2c" stroke-width="2.5"/><rect x="31.1" y="317.3" width="2.4" height="2.4" rx="0.3" fill="#1d3a6e"/><line x1="30.5" y1="320.9" x2="34.1" y2="320.9" stroke="#6a7a90" stroke-width="0.5"/>
<circle cx="27.6" cy="328.2" r="0.55" fill="#444"/><path d="M26.8 331.2 L27.6 328.7 L28.4 331.2 Z" fill="#444"/><circle cx="31.4" cy="328.2" r="0.55" fill="#444"/><path d="M30.6 331.2 L31.4 328.7 L32.2 331.2 Z" fill="#444"/><circle cx="35.2" cy="328.2" r="0.55" fill="#444"/><path d="M34.4 331.2 L35.2 328.7 L36 331.2 Z" fill="#444"/>
<line x1="40" y1="311" x2="66" y2="311" stroke="#8a9ab0" stroke-width="0.4" opacity="0.8"/>
<line x1="52" y1="316.2" x2="58" y2="316.2" stroke="#b03a5a" stroke-width="0.6" opacity="0.8"/><line x1="52" y1="317.6" x2="56.6" y2="317.6" stroke="#2a62b0" stroke-width="0.6" opacity="0.8"/><line x1="52" y1="319" x2="57.6" y2="319" stroke="#2a62b0" stroke-width="0.6" opacity="0.8"/><line x1="52" y1="320.4" x2="58" y2="320.4" stroke="#b03a5a" stroke-width="0.6" opacity="0.8"/>
<rect x="57.4" y="321.8" width="10" height="6.6" rx="0.3" fill="#5a4a3a"/><rect x="58.4" y="322.6" width="8" height="4.8" fill="#b08050"/><rect x="59" y="323.6" width="3" height="3" fill="#4a6a8a"/><rect x="62.8" y="323.6" width="3" height="3" fill="#3a7a5a"/><path d="M57.4 328.4 H67.4 L68.8 329.8 H56 Z" fill="#8a8a8a"/>
<rect x="20" y="342.3" width="50.5" height="28.4" rx="1.4" fill="#fff" stroke="#ddd6d3" stroke-width="0.5"/><path d="M21.4 342.3 H23.8 V370.7 H21.4 a1.4 1.4 0 0 1 -1.4 -1.4 V343.7 a1.4 1.4 0 0 1 1.4 -1.4 Z" fill="#062d60"/><rect x="21.2" y="343.3" width="1.4" height="1.4" fill="#fff" opacity="0.8"/>
<line x1="27" y1="345.9" x2="50.6" y2="345.9" stroke="#1d3a6e" stroke-width="0.6" opacity="0.8"/>
<circle cx="32.3" cy="357.9" r="5" fill="none" stroke="#4c9cdc" stroke-width="2.7"/><path d="M30.1 353.3 A5.1 5.1 0 0 1 34.7 353.4" fill="none" stroke="#2a2a2c" stroke-width="2.5"/><rect x="31.1" y="355.8" width="2.4" height="2.4" rx="0.3" fill="#1d3a6e"/><line x1="30.5" y1="359.4" x2="34.1" y2="359.4" stroke="#6a7a90" stroke-width="0.5"/>
<circle cx="27.6" cy="366.7" r="0.55" fill="#444"/><path d="M26.8 369.7 L27.6 367.2 L28.4 369.7 Z" fill="#444"/><circle cx="31.4" cy="366.7" r="0.55" fill="#444"/><path d="M30.6 369.7 L31.4 367.2 L32.2 369.7 Z" fill="#444"/><circle cx="35.2" cy="366.7" r="0.55" fill="#444"/><path d="M34.4 369.7 L35.2 367.2 L36 369.7 Z" fill="#444"/>
<line x1="45.6" y1="351.9" x2="64" y2="351.9" stroke="#8a9ab0" stroke-width="0.4" opacity="0.8"/><line x1="45.6" y1="353.1" x2="49" y2="353.1" stroke="#8a9ab0" stroke-width="0.4" opacity="0.8"/>
<line x1="48.6" y1="357.5" x2="55" y2="357.5" stroke="#b03a5a" stroke-width="0.7" opacity="0.8"/>
<rect x="57.4" y="360.7" width="10" height="6.6" rx="0.3" fill="#5a4a3a"/><rect x="58.4" y="361.5" width="8" height="4.8" fill="#b08050"/><rect x="59" y="362.5" width="3" height="3" fill="#4a6a8a"/><rect x="62.8" y="362.5" width="3" height="3" fill="#3a7a5a"/><path d="M57.4 367.3 H67.4 L68.8 368.7 H56 Z" fill="#8a8a8a"/>
<rect x="20" y="380.8" width="50.5" height="28.4" rx="1.4" fill="#fff" stroke="#ddd6d3" stroke-width="0.5"/><path d="M21.4 380.8 H23.8 V409.2 H21.4 a1.4 1.4 0 0 1 -1.4 -1.4 V382.2 a1.4 1.4 0 0 1 1.4 -1.4 Z" fill="#062d60"/><rect x="21.2" y="381.8" width="1.4" height="1.4" fill="#fff" opacity="0.8"/>
<line x1="27" y1="384.4" x2="50.6" y2="384.4" stroke="#1d3a6e" stroke-width="0.6" opacity="0.8"/>
<circle cx="32.3" cy="396.4" r="5" fill="none" stroke="#4c9cdc" stroke-width="2.7"/><path d="M30.1 391.8 A5.1 5.1 0 0 1 34.7 391.9" fill="none" stroke="#2a2a2c" stroke-width="2.5"/><rect x="31.1" y="394.3" width="2.4" height="2.4" rx="0.3" fill="#1d3a6e"/><line x1="30.5" y1="397.9" x2="34.1" y2="397.9" stroke="#6a7a90" stroke-width="0.5"/>
<circle cx="27.6" cy="405.2" r="0.55" fill="#444"/><path d="M26.8 408.2 L27.6 405.7 L28.4 408.2 Z" fill="#444"/><circle cx="31.4" cy="405.2" r="0.55" fill="#444"/><path d="M30.6 408.2 L31.4 405.7 L32.2 408.2 Z" fill="#444"/><circle cx="35.2" cy="405.2" r="0.55" fill="#444"/><path d="M34.4 408.2 L35.2 405.7 L36 408.2 Z" fill="#444"/>
<line x1="41" y1="387.4" x2="66" y2="387.4" stroke="#8a9ab0" stroke-width="0.4" opacity="0.8"/><line x1="41" y1="388.8" x2="60" y2="388.8" stroke="#8a9ab0" stroke-width="0.4" opacity="0.8"/>
<rect x="43.6" y="391.2" width="4.6" height="4" rx="0.2" fill="#3a62b8"/><line x1="43.6" y1="396.8" x2="48" y2="396.8" stroke="#b03a5a" stroke-width="0.6" opacity="0.8"/>
<rect x="57.4" y="398.4" width="10" height="6.6" rx="0.3" fill="#5a4a3a"/><rect x="58.4" y="399.2" width="8" height="4.8" fill="#b08050"/><rect x="59" y="400.2" width="3" height="3" fill="#4a6a8a"/><rect x="62.8" y="400.2" width="3" height="3" fill="#3a7a5a"/><path d="M57.4 405 H67.4 L68.8 406.4 H56 Z" fill="#8a8a8a"/>
<rect x="20" y="419" width="50.5" height="28.4" rx="1.4" fill="#fff" stroke="#ddd6d3" stroke-width="0.5"/><path d="M21.4 419 H23.8 V447.4 H21.4 a1.4 1.4 0 0 1 -1.4 -1.4 V420.4 a1.4 1.4 0 0 1 1.4 -1.4 Z" fill="#062d60"/><rect x="21.2" y="420" width="1.4" height="1.4" fill="#fff" opacity="0.8"/>
<line x1="27" y1="422.6" x2="50.6" y2="422.6" stroke="#1d3a6e" stroke-width="0.6" opacity="0.8"/>
<circle cx="32.3" cy="434.6" r="5" fill="none" stroke="#4c9cdc" stroke-width="2.7"/><path d="M30.1 430 A5.1 5.1 0 0 1 34.7 430.1" fill="none" stroke="#2a2a2c" stroke-width="2.5"/><rect x="31.1" y="432.5" width="2.4" height="2.4" rx="0.3" fill="#1d3a6e"/><line x1="30.5" y1="436.1" x2="34.1" y2="436.1" stroke="#6a7a90" stroke-width="0.5"/>
<circle cx="27.6" cy="443.4" r="0.55" fill="#444"/><path d="M26.8 446.4 L27.6 443.9 L28.4 446.4 Z" fill="#444"/><circle cx="31.4" cy="443.4" r="0.55" fill="#444"/><path d="M30.6 446.4 L31.4 443.9 L32.2 446.4 Z" fill="#444"/><circle cx="35.2" cy="443.4" r="0.55" fill="#444"/><path d="M34.4 446.4 L35.2 443.9 L36 446.4 Z" fill="#444"/>
<line x1="41" y1="425.6" x2="66" y2="425.6" stroke="#8a9ab0" stroke-width="0.4" opacity="0.8"/>
</g>
<rect x="80.4" y="142.4" width="7.6" height="291" fill="#f4f0ee"/>
<path d="M82.2 147 L84 144.4 L85.8 147 Z" fill="#555"/>
<rect x="82.3" y="149.4" width="3.4" height="184.2" rx="1.7" fill="#727272"/>
<path d="M82.2 427.6 L84 430.2 L85.8 427.6 Z" fill="#555"/>
</g>
<!-- p_bottom -->
<text x="7" y="484.99" font-size="7.8" fill="#fff" class="b" textLength="20.3" lengthAdjust="spacingAndGlyphs">11:04</text>
<rect x="33.3" y="476.5" width="0.9" height="11.5" fill="#7a7a7a"/>
<text x="40.2" y="484.99" font-size="7.8" fill="#fff" class="b" textLength="50" lengthAdjust="spacingAndGlyphs">axe-ixfy-skc</text>
<rect x="352.7" y="470" width="46.3" height="25" rx="6.5" fill="#6d0f14"/>
<rect x="372.3" y="469" width="27.7" height="27" rx="7" fill="#121212"/>
<rect x="373.5" y="470" width="25.5" height="25" rx="6" fill="#f9dad8"/>
<path d="M362.3 484.2 L365 481.4 L367.7 484.2" fill="none" stroke="#fff" stroke-width="1.1" stroke-linecap="round" stroke-linejoin="round"/>
<g stroke="#7b1a20" stroke-width="1.0" fill="none" stroke-linecap="round">
<rect x="385" y="477.9" width="2.6" height="5.6" rx="1.3"/>
<path d="M383.1 482.1 a3.2 3.2 0 0 0 6.4 0"/>
<path d="M386.3 485.3 v2"/>
<path d="M382.5 478.1 L390.1 487.1"/>
</g>
<rect x="403.4" y="470" width="46.4" height="25" rx="12.5" fill="#28292c"/>
<circle cx="437.3" cy="482.5" r="12.5" fill="#333538"/>
<path d="M412.7 484.2 L415.4 481.4 L418.1 484.2" fill="none" stroke="#a8a8a8" stroke-width="1.1" stroke-linecap="round" stroke-linejoin="round"/>
<rect x="432.2" y="478.9" width="7.4" height="7.2" rx="1" fill="none" stroke="#fff" stroke-width="1.1"/>
<path d="M439.8 481.6 L442.6 479.4 L442.6 485.6 L439.8 483.4 Z" fill="#fff"/>
<rect x="454" y="470" width="29.4" height="25" rx="12.5" fill="#2f3033"/>
<rect x="464" y="478.6" width="9.4" height="6.4" rx="0.8" fill="none" stroke="#fff" stroke-width="1.1"/>
<line x1="462.6" y1="486.9" x2="474.8" y2="486.9" stroke="#fff" stroke-width="1.1"/>
<path d="M468.7 483.8 L468.7 480.4 M467 481.8 L468.7 480.1 L470.4 481.8" fill="none" stroke="#fff" stroke-width="0.9"/>
<rect x="487.6" y="470" width="29.7" height="25" rx="12.5" fill="#2f3033"/>
<circle cx="502.5" cy="482.5" r="4.6" fill="none" stroke="#fff" stroke-width="1.1"/>
<circle cx="500.8" cy="481.2" r="0.7" fill="#fff"/><circle cx="504.2" cy="481.2" r="0.7" fill="#fff"/>
<path d="M500 483.4 a2.5 2.5 0 0 0 5 0 Z" fill="#fff"/>
<rect x="521.4" y="470" width="29.7" height="25" rx="12.5" fill="#2f3033"/>
<rect x="531.4" y="478.4" width="9.8" height="8.2" rx="1" fill="none" stroke="#fff" stroke-width="1.1"/>
<path d="M533.4 481.3 h2.2 M533.4 483.7 h2.2 M537 481.3 h2.2 M537 483.7 h2.2" fill="none" stroke="#fff" stroke-width="1"/>
<rect x="555.2" y="470" width="29.6" height="25" rx="12.5" fill="#2f3033"/>
<path d="M567.2 482 V478.6 M568.9 481.6 V477.6 M570.6 481.6 V477.4 M572.3 481.8 V478.2" fill="none" stroke="#fff" stroke-width="1.15" stroke-linecap="round"/>
<path d="M566.4 481.5 H573.2 V485 a3.2 3.2 0 0 1 -3.2 3.2 C567.8 488.2 566.6 486.6 564.6 483.2 L565.4 482.6 L566.4 483.6 Z" fill="#fff"/>
<rect x="588.9" y="470" width="19.3" height="25" rx="9.6" fill="#2f3033"/>
<circle cx="598.5" cy="479.2" r="0.95" fill="#fff"/>
<circle cx="598.5" cy="482.5" r="0.95" fill="#fff"/>
<circle cx="598.5" cy="485.8" r="0.95" fill="#fff"/>
<rect x="612.3" y="470" width="37.8" height="25" rx="12.5" fill="#e42a3b"/>
<path d="M625.6 484 C625.4 482.4 628 480.6 631.2 480.6 C634.4 480.6 637 482.4 636.8 484 L636.6 485 L634 484.4 L633.8 482.8 C632.2 482.3 630.2 482.3 628.6 482.8 L628.4 484.4 L625.8 485 Z" fill="#fff"/>
<circle cx="887.5" cy="482.5" r="4.9" fill="none" stroke="#fff" stroke-width="1.1"/>
<rect x="887" y="481.8" width="1" height="3.2" fill="#fff"/><circle cx="887.5" cy="480.2" r="0.65" fill="#fff"/>
<circle cx="911.8" cy="480.2" r="1.9" fill="#fff"/>
<path d="M907.4 486.6 V485.4 C907.4 483.6 910 482.9 911.8 482.9 C913.6 482.9 916.2 483.6 916.2 485.4 V486.6 Z" fill="#fff"/>
<path d="M914.4 478.4 A1.9 1.9 0 0 1 914.4 482 M916.4 483.3 C917.6 483.8 918.6 484.5 918.6 485.6 V486.6 H917.4" fill="none" stroke="#fff" stroke-width="1"/>
<rect x="913.5" y="466" width="13.1" height="8.5" rx="4.2" fill="#5f6368"/>
<text x="920.1" y="472.23" font-size="5.4" fill="#fff" text-anchor="middle" class="b">11</text>
<path d="M933.4 477.8 H943.4 V485.4 H935.6 L933.4 487.6 Z" fill="none" stroke="#fff" stroke-width="1.1" stroke-linejoin="round"/>
<path d="M935.4 480.4 H941.4 M935.4 482.6 H939.8" fill="none" stroke="#d0d0d0" stroke-width="0.9"/>
<rect x="959.25" y="478.15" width="2.1" height="2.1" fill="#fff"/>
<rect x="959.25" y="481.45" width="2.1" height="2.1" fill="#fff"/>
<rect x="959.25" y="484.75" width="2.1" height="2.1" fill="#fff"/>
<rect x="962.55" y="478.15" width="2.1" height="2.1" fill="#fff"/>
<rect x="962.55" y="481.45" width="2.1" height="2.1" fill="#fff"/>
<rect x="962.55" y="484.75" width="2.1" height="2.1" fill="#fff"/>
<rect x="965.85" y="478.15" width="2.1" height="2.1" fill="#fff"/>
<rect x="965.85" y="481.45" width="2.1" height="2.1" fill="#fff"/>
<rect x="965.85" y="484.75" width="2.1" height="2.1" fill="#fff"/>
<rect x="984.6" y="481.2" width="7.8" height="6.8" rx="1" fill="none" stroke="#fff" stroke-width="1.1"/>
<path d="M986.2 481 V479.4 a2.3 2.3 0 0 1 4.6 0 V481" fill="none" stroke="#fff" stroke-width="1.1"/>
<circle cx="992.3" cy="486.2" r="2.6" fill="#121212"/><circle cx="992.3" cy="486.2" r="2" fill="#fff"/>
<rect x="992" y="485.9" width="0.6" height="1.5" fill="#121212"/>
</svg>
</body>
</html>
